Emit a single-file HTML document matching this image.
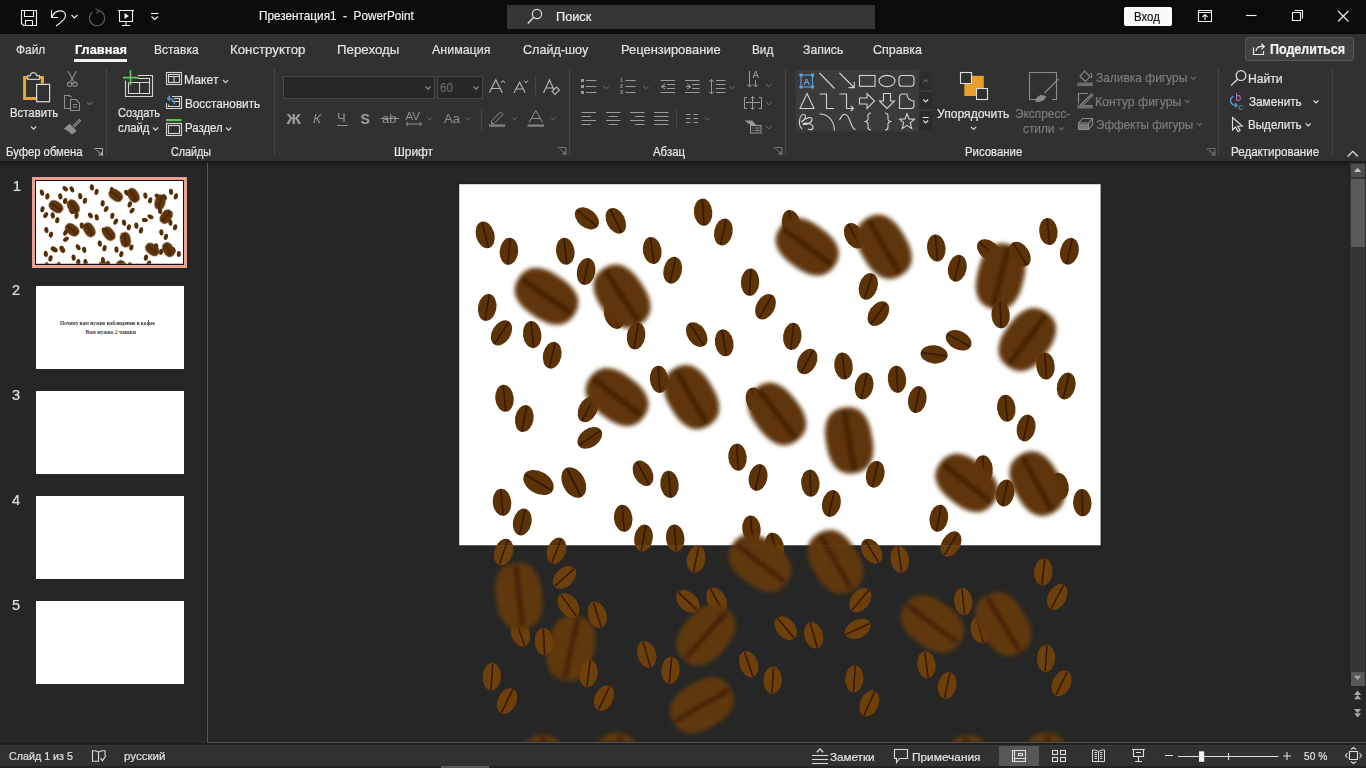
<!DOCTYPE html>
<html><head><meta charset="utf-8">
<style>
*{box-sizing:border-box}
html,body{margin:0;padding:0}
body{width:1366px;height:768px;overflow:hidden;background:#262626;position:relative;font-family:"Liberation Sans",sans-serif;color:#e6e6e6}
.a{position:absolute}
.tx{position:absolute;white-space:nowrap;line-height:1;transform-origin:0 0;-webkit-text-stroke:0.2px currentColor}
#title{left:0;top:0;width:1366px;height:34px;background:#0b0b0b}
#ribbon{left:0;top:34px;width:1366px;height:127px;background:#323131}
#rsep{left:0;top:161px;width:1366px;height:6px;background:linear-gradient(#1b1b1b 0,#1b1b1b 2px,#262626 6px)}
#status{left:0;top:745px;width:1366px;height:21px;background:#323130;border-top:1px solid #3a3a3a}
#sbot{left:0;top:766px;width:1366px;height:2px;background:#222}
.thumb{position:absolute;left:35.5px;width:148px;height:83.5px;background:#fff}
</style></head><body>
<div id="title" class="a"></div>
<div id="ribbon" class="a"></div>
<div id="rsep" class="a"></div>
<div id="status" class="a"></div>
<div id="sbot" class="a"></div>
<div class="a" style="left:507px;top:5px;width:368px;height:24px;background:#363636"></div>
<div class="a" style="left:1124px;top:7px;width:48px;height:19px;background:#fafafa;border-radius:2px"></div>
<div class="a" style="left:74px;top:59px;width:53px;height:3px;background:#f2f2f2"></div>
<div class="a" style="left:1245px;top:37px;width:109px;height:24px;background:#414141;border:1px solid #575757;border-radius:3px"></div>
<!-- slide pane -->
<div class="a" style="left:206px;top:163px;width:3px;height:580px;background:#222"></div><div class="a" style="left:207px;top:163px;width:1px;height:580px;background:#555"></div>
<div class="a" style="left:207px;top:742px;width:1159px;height:1px;background:#555"></div><div class="a" style="left:0;top:743px;width:1366px;height:2px;background:#1e1e1e"></div>
<div class="a" style="left:32px;top:177px;width:155px;height:91px;background:#e9a292"></div>
<div class="a" style="left:35px;top:180px;width:149px;height:85px;background:#1a1212"></div>
<div class="thumb" style="top:285.5px"><div style="position:absolute;left:24px;top:34px;font-family:'Liberation Serif';font-weight:bold;font-size:5.6px;color:#333;white-space:nowrap;transform:scaleX(0.95);transform-origin:0 0">Почему нам нужно наблюдение в кофее</div><div style="position:absolute;left:50px;top:43px;font-family:'Liberation Serif';font-weight:bold;font-size:5.6px;color:#444;white-space:nowrap">Вам нужно 2 чашки</div></div>
<div class="thumb" style="top:390.5px"></div>
<div class="thumb" style="top:495.5px"></div>
<div class="thumb" style="top:600.5px"></div>
<!-- normal view highlighted -->
<div class="a" style="left:999px;top:746px;width:40px;height:20px;background:#575757"></div>
<!-- vertical scrollbar -->
<div class="a" style="left:1348px;top:163px;width:2px;height:523px;background:#222"></div>
<div class="a" style="left:1350px;top:163px;width:15px;height:509px;background:#353535"></div>
<div class="a" style="left:1350.5px;top:164px;width:14px;height:13px;background:#4d4d4d"></div>
<div class="a" style="left:1350.5px;top:179px;width:14px;height:68px;background:#5a5a5a"></div>
<div class="a" style="left:1350.5px;top:672px;width:14px;height:13.5px;background:#575757"></div>
<div class="a" style="left:441px;top:766px;width:48px;height:2px;background:#5a5a5a"></div>
<svg width="1366" height="768" style="position:absolute;left:0;top:0">
<defs>
<path id="Lp" d="M23.2,0.0 L23.0,6.3 L22.6,11.0 L21.7,15.2 L20.6,18.9 L19.2,22.1 L17.5,25.0 L15.5,27.5 L13.2,29.5 L10.6,31.1 L7.7,32.3 L4.4,33.0 L0.0,33.2 L-4.4,33.0 L-7.7,32.3 L-10.6,31.1 L-13.2,29.5 L-15.5,27.5 L-17.5,25.0 L-19.2,22.1 L-20.6,18.9 L-21.7,15.2 L-22.6,11.0 L-23.0,6.3 L-23.2,0.0 L-23.0,-6.3 L-22.6,-11.0 L-21.7,-15.2 L-20.6,-18.9 L-19.2,-22.1 L-17.5,-25.0 L-15.5,-27.5 L-13.2,-29.5 L-10.6,-31.1 L-7.7,-32.3 L-4.4,-33.0 L-0.0,-33.2 L4.4,-33.0 L7.7,-32.3 L10.6,-31.1 L13.2,-29.5 L15.5,-27.5 L17.5,-25.0 L19.2,-22.1 L20.6,-18.9 L21.7,-15.2 L22.6,-11.0 L23.0,-6.3Z"/>
<filter id="blr" x="-30%" y="-30%" width="160%" height="160%"><feGaussianBlur stdDeviation="1.9"/></filter>
<clipPath id="cs"><rect x="459.2" y="184.2" width="641.4" height="361.1"/></clipPath>
<clipPath id="co"><rect x="459.2" y="545.3" width="641.4" height="196.2"/></clipPath>
<g id="insideBeans"><g transform="translate(614.0 316.0) rotate(-25.0) scale(1)"><ellipse rx="9.2" ry="13.6" fill="#5c3207"/><path d="M0.3,-12.9 L-0.2,12.9" stroke="#341704" stroke-width="1.5" fill="none"/></g><g transform="translate(791.1 223.5) rotate(-10.0) scale(1)"><ellipse rx="9.2" ry="13.6" fill="#5c3207"/><path d="M0.3,-12.9 L-0.2,12.9" stroke="#341704" stroke-width="1.5" fill="none"/></g><g transform="translate(854.2 235.7) rotate(-28.0) scale(1)"><ellipse rx="9.2" ry="13.6" fill="#5c3207"/><path d="M0.3,-12.9 L-0.2,12.9" stroke="#341704" stroke-width="1.5" fill="none"/></g><g transform="translate(989.0 250.5) rotate(-50.0) scale(1)"><ellipse rx="9.2" ry="13.6" fill="#5c3207"/><path d="M0.3,-12.9 L-0.2,12.9" stroke="#341704" stroke-width="1.5" fill="none"/></g><g transform="translate(587.9 409.5) rotate(27.0) scale(1)"><ellipse rx="9.2" ry="13.6" fill="#5c3207"/><path d="M0.3,-12.9 L-0.2,12.9" stroke="#341704" stroke-width="1.5" fill="none"/></g><g transform="translate(755.6 400.8) rotate(-20.0) scale(1)"><ellipse rx="9.2" ry="13.6" fill="#5c3207"/><path d="M0.3,-12.9 L-0.2,12.9" stroke="#341704" stroke-width="1.5" fill="none"/></g><g transform="translate(751.5 529.0) rotate(-6.0) scale(1)"><ellipse rx="9.2" ry="13.6" fill="#5c3207"/><path d="M0.3,-12.9 L-0.2,12.9" stroke="#341704" stroke-width="1.5" fill="none"/></g><g transform="translate(774.5 546.0) rotate(-15.0) scale(1)"><ellipse rx="9.2" ry="13.6" fill="#5c3207"/><path d="M0.3,-12.9 L-0.2,12.9" stroke="#341704" stroke-width="1.5" fill="none"/></g><g transform="translate(983.6 468.9) rotate(-5.0) scale(1)"><ellipse rx="9.2" ry="13.6" fill="#5c3207"/><path d="M0.3,-12.9 L-0.2,12.9" stroke="#341704" stroke-width="1.5" fill="none"/></g><g transform="translate(1059.5 486.2) rotate(-10.0) scale(1)"><ellipse rx="9.2" ry="13.6" fill="#5c3207"/><path d="M0.3,-12.9 L-0.2,12.9" stroke="#341704" stroke-width="1.5" fill="none"/></g><g transform="translate(520.4 633.5) rotate(-20.0) scale(1)"><ellipse rx="9.2" ry="13.6" fill="#5c3207"/><path d="M0.3,-12.9 L-0.2,12.9" stroke="#341704" stroke-width="1.5" fill="none"/></g><g transform="translate(687.8 601.4) rotate(-47.0) scale(1)"><ellipse rx="9.2" ry="13.6" fill="#5c3207"/><path d="M0.3,-12.9 L-0.2,12.9" stroke="#341704" stroke-width="1.5" fill="none"/></g><g transform="translate(716.7 600.1) rotate(-30.0) scale(1)"><ellipse rx="9.2" ry="13.6" fill="#5c3207"/><path d="M0.3,-12.9 L-0.2,12.9" stroke="#341704" stroke-width="1.5" fill="none"/></g><g transform="translate(980.0 630.0) rotate(-15.0) scale(1)"><ellipse rx="9.2" ry="13.6" fill="#5c3207"/><path d="M0.3,-12.9 L-0.2,12.9" stroke="#341704" stroke-width="1.5" fill="none"/></g><g transform="translate(546.5 296.3) rotate(-56.0)" filter="url(#blr)"><use href="#Lp" fill="#5f3407"/><path d="M0.6,-31 L-0.3,31" stroke="#341704" stroke-width="3.8" fill="none"/></g><g transform="translate(622.0 296.3) rotate(-34.0)" filter="url(#blr)"><use href="#Lp" fill="#5f3407"/><path d="M0.6,-31 L-0.3,31" stroke="#341704" stroke-width="3.8" fill="none"/></g><g transform="translate(807.2 246.8) rotate(-54.0)" filter="url(#blr)"><use href="#Lp" fill="#5f3407"/><path d="M0.6,-31 L-0.3,31" stroke="#341704" stroke-width="3.8" fill="none"/></g><g transform="translate(883.9 246.8) rotate(-31.0)" filter="url(#blr)"><use href="#Lp" fill="#5f3407"/><path d="M0.6,-31 L-0.3,31" stroke="#341704" stroke-width="3.8" fill="none"/></g><g transform="translate(1000.6 276.5) rotate(14.0)" filter="url(#blr)"><use href="#Lp" fill="#5f3407"/><path d="M0.6,-31 L-0.3,31" stroke="#341704" stroke-width="3.8" fill="none"/></g><g transform="translate(1027.3 339.6) rotate(36.0)" filter="url(#blr)"><use href="#Lp" fill="#5f3407"/><path d="M0.6,-31 L-0.3,31" stroke="#341704" stroke-width="3.8" fill="none"/></g><g transform="translate(617.0 397.1) rotate(-53.0)" filter="url(#blr)"><use href="#Lp" fill="#5f3407"/><path d="M0.6,-31 L-0.3,31" stroke="#341704" stroke-width="3.8" fill="none"/></g><g transform="translate(691.3 397.1) rotate(-31.0)" filter="url(#blr)"><use href="#Lp" fill="#5f3407"/><path d="M0.6,-31 L-0.3,31" stroke="#341704" stroke-width="3.8" fill="none"/></g><g transform="translate(777.0 414.0) rotate(-38.0)" filter="url(#blr)"><use href="#Lp" fill="#5f3407"/><path d="M0.6,-31 L-0.3,31" stroke="#341704" stroke-width="3.8" fill="none"/></g><g transform="translate(849.2 440.4) rotate(-10.0)" filter="url(#blr)"><use href="#Lp" fill="#5f3407"/><path d="M0.6,-31 L-0.3,31" stroke="#341704" stroke-width="3.8" fill="none"/></g><g transform="translate(966.7 483.0) rotate(-52.0)" filter="url(#blr)"><use href="#Lp" fill="#5f3407"/><path d="M0.6,-31 L-0.3,31" stroke="#341704" stroke-width="3.8" fill="none"/></g><g transform="translate(1037.0 483.7) rotate(-29.0)" filter="url(#blr)"><use href="#Lp" fill="#5f3407"/><path d="M0.6,-31 L-0.3,31" stroke="#341704" stroke-width="3.8" fill="none"/></g><g transform="translate(519.0 596.0) rotate(-7.0)" filter="url(#blr)"><use href="#Lp" fill="#5f3407"/><path d="M0.6,-31 L-0.3,31" stroke="#341704" stroke-width="3.8" fill="none"/></g><g transform="translate(571.1 648.1) rotate(12.0)" filter="url(#blr)"><use href="#Lp" fill="#5f3407"/><path d="M0.6,-31 L-0.3,31" stroke="#341704" stroke-width="3.8" fill="none"/></g><g transform="translate(760.0 563.0) rotate(-53.0)" filter="url(#blr)"><use href="#Lp" fill="#5f3407"/><path d="M0.6,-31 L-0.3,31" stroke="#341704" stroke-width="3.8" fill="none"/></g><g transform="translate(706.0 634.8) rotate(41.0)" filter="url(#blr)"><use href="#Lp" fill="#5f3407"/><path d="M0.6,-31 L-0.3,31" stroke="#341704" stroke-width="3.8" fill="none"/></g><g transform="translate(702.0 705.5) rotate(59.0)" filter="url(#blr)"><use href="#Lp" fill="#5f3407"/><path d="M0.6,-31 L-0.3,31" stroke="#341704" stroke-width="3.8" fill="none"/></g><g transform="translate(835.5 562.0) rotate(-31.0)" filter="url(#blr)"><use href="#Lp" fill="#5f3407"/><path d="M0.6,-31 L-0.3,31" stroke="#341704" stroke-width="3.8" fill="none"/></g><g transform="translate(932.5 624.1) rotate(-54.0)" filter="url(#blr)"><use href="#Lp" fill="#5f3407"/><path d="M0.6,-31 L-0.3,31" stroke="#341704" stroke-width="3.8" fill="none"/></g><g transform="translate(1003.3 624.1) rotate(-32.0)" filter="url(#blr)"><use href="#Lp" fill="#5f3407"/><path d="M0.6,-31 L-0.3,31" stroke="#341704" stroke-width="3.8" fill="none"/></g><g transform="translate(543.0 768.0) rotate(0.0)" filter="url(#blr)"><use href="#Lp" fill="#5f3407"/><path d="M0.6,-31 L-0.3,31" stroke="#341704" stroke-width="3.8" fill="none"/></g><g transform="translate(615.0 766.0) rotate(10.0)" filter="url(#blr)"><use href="#Lp" fill="#5f3407"/><path d="M0.6,-31 L-0.3,31" stroke="#341704" stroke-width="3.8" fill="none"/></g><g transform="translate(970.0 768.0) rotate(-10.0)" filter="url(#blr)"><use href="#Lp" fill="#5f3407"/><path d="M0.6,-31 L-0.3,31" stroke="#341704" stroke-width="3.8" fill="none"/></g><g transform="translate(1045.0 766.0) rotate(5.0)" filter="url(#blr)"><use href="#Lp" fill="#5f3407"/><path d="M0.6,-31 L-0.3,31" stroke="#341704" stroke-width="3.8" fill="none"/></g><g transform="translate(485.2 234.9) rotate(-16.0) scale(1)"><ellipse rx="9.2" ry="13.6" fill="#5c3207"/><path d="M0.3,-12.9 L-0.2,12.9" stroke="#341704" stroke-width="1.5" fill="none"/></g><g transform="translate(508.9 251.3) rotate(5.0) scale(1)"><ellipse rx="9.2" ry="13.6" fill="#5c3207"/><path d="M0.3,-12.9 L-0.2,12.9" stroke="#341704" stroke-width="1.5" fill="none"/></g><g transform="translate(586.9 218.3) rotate(-51.0) scale(1)"><ellipse rx="9.2" ry="13.6" fill="#5c3207"/><path d="M0.3,-12.9 L-0.2,12.9" stroke="#341704" stroke-width="1.5" fill="none"/></g><g transform="translate(615.8 220.8) rotate(-27.0) scale(1)"><ellipse rx="9.2" ry="13.6" fill="#5c3207"/><path d="M0.3,-12.9 L-0.2,12.9" stroke="#341704" stroke-width="1.5" fill="none"/></g><g transform="translate(565.3 251.3) rotate(-7.0) scale(1)"><ellipse rx="9.2" ry="13.6" fill="#5c3207"/><path d="M0.3,-12.9 L-0.2,12.9" stroke="#341704" stroke-width="1.5" fill="none"/></g><g transform="translate(586.1 271.5) rotate(11.0) scale(1)"><ellipse rx="9.2" ry="13.6" fill="#5c3207"/><path d="M0.3,-12.9 L-0.2,12.9" stroke="#341704" stroke-width="1.5" fill="none"/></g><g transform="translate(487.2 307.4) rotate(9.0) scale(1)"><ellipse rx="9.2" ry="13.6" fill="#5c3207"/><path d="M0.3,-12.9 L-0.2,12.9" stroke="#341704" stroke-width="1.5" fill="none"/></g><g transform="translate(501.5 332.9) rotate(32.0) scale(1)"><ellipse rx="9.2" ry="13.6" fill="#5c3207"/><path d="M0.3,-12.9 L-0.2,12.9" stroke="#341704" stroke-width="1.5" fill="none"/></g><g transform="translate(532.2 334.6) rotate(-7.0) scale(1)"><ellipse rx="9.2" ry="13.6" fill="#5c3207"/><path d="M0.3,-12.9 L-0.2,12.9" stroke="#341704" stroke-width="1.5" fill="none"/></g><g transform="translate(552.2 355.2) rotate(12.0) scale(1)"><ellipse rx="9.2" ry="13.6" fill="#5c3207"/><path d="M0.3,-12.9 L-0.2,12.9" stroke="#341704" stroke-width="1.5" fill="none"/></g><g transform="translate(636.1 335.9) rotate(9.0) scale(1)"><ellipse rx="9.2" ry="13.6" fill="#5c3207"/><path d="M0.3,-12.9 L-0.2,12.9" stroke="#341704" stroke-width="1.5" fill="none"/></g><g transform="translate(652.2 250.5) rotate(-9.0) scale(1)"><ellipse rx="9.2" ry="13.6" fill="#5c3207"/><path d="M0.3,-12.9 L-0.2,12.9" stroke="#341704" stroke-width="1.5" fill="none"/></g><g transform="translate(672.7 270.3) rotate(12.0) scale(1)"><ellipse rx="9.2" ry="13.6" fill="#5c3207"/><path d="M0.3,-12.9 L-0.2,12.9" stroke="#341704" stroke-width="1.5" fill="none"/></g><g transform="translate(703.1 212.2) rotate(-5.0) scale(1)"><ellipse rx="9.2" ry="13.6" fill="#5c3207"/><path d="M0.3,-12.9 L-0.2,12.9" stroke="#341704" stroke-width="1.5" fill="none"/></g><g transform="translate(723.4 232.0) rotate(11.0) scale(1)"><ellipse rx="9.2" ry="13.6" fill="#5c3207"/><path d="M0.3,-12.9 L-0.2,12.9" stroke="#341704" stroke-width="1.5" fill="none"/></g><g transform="translate(750.1 282.2) rotate(3.0) scale(1)"><ellipse rx="9.2" ry="13.6" fill="#5c3207"/><path d="M0.3,-12.9 L-0.2,12.9" stroke="#341704" stroke-width="1.5" fill="none"/></g><g transform="translate(765.5 306.7) rotate(28.0) scale(1)"><ellipse rx="9.2" ry="13.6" fill="#5c3207"/><path d="M0.3,-12.9 L-0.2,12.9" stroke="#341704" stroke-width="1.5" fill="none"/></g><g transform="translate(696.7 334.6) rotate(-34.0) scale(1)"><ellipse rx="9.2" ry="13.6" fill="#5c3207"/><path d="M0.3,-12.9 L-0.2,12.9" stroke="#341704" stroke-width="1.5" fill="none"/></g><g transform="translate(724.2 342.8) rotate(-10.0) scale(1)"><ellipse rx="9.2" ry="13.6" fill="#5c3207"/><path d="M0.3,-12.9 L-0.2,12.9" stroke="#341704" stroke-width="1.5" fill="none"/></g><g transform="translate(868.3 286.4) rotate(17.0) scale(1)"><ellipse rx="9.2" ry="13.6" fill="#5c3207"/><path d="M0.3,-12.9 L-0.2,12.9" stroke="#341704" stroke-width="1.5" fill="none"/></g><g transform="translate(878.4 313.6) rotate(35.0) scale(1)"><ellipse rx="9.2" ry="13.6" fill="#5c3207"/><path d="M0.3,-12.9 L-0.2,12.9" stroke="#341704" stroke-width="1.5" fill="none"/></g><g transform="translate(936.3 248.0) rotate(-6.0) scale(1)"><ellipse rx="9.2" ry="13.6" fill="#5c3207"/><path d="M0.3,-12.9 L-0.2,12.9" stroke="#341704" stroke-width="1.5" fill="none"/></g><g transform="translate(957.3 268.3) rotate(12.0) scale(1)"><ellipse rx="9.2" ry="13.6" fill="#5c3207"/><path d="M0.3,-12.9 L-0.2,12.9" stroke="#341704" stroke-width="1.5" fill="none"/></g><g transform="translate(1020.0 254.2) rotate(-33.0) scale(1)"><ellipse rx="9.2" ry="13.6" fill="#5c3207"/><path d="M0.3,-12.9 L-0.2,12.9" stroke="#341704" stroke-width="1.5" fill="none"/></g><g transform="translate(1000.6 314.8) rotate(-4.0) scale(1)"><ellipse rx="9.2" ry="13.6" fill="#5c3207"/><path d="M0.3,-12.9 L-0.2,12.9" stroke="#341704" stroke-width="1.5" fill="none"/></g><g transform="translate(1048.4 231.5) rotate(-6.0) scale(1)"><ellipse rx="9.2" ry="13.6" fill="#5c3207"/><path d="M0.3,-12.9 L-0.2,12.9" stroke="#341704" stroke-width="1.5" fill="none"/></g><g transform="translate(1069.4 251.3) rotate(12.0) scale(1)"><ellipse rx="9.2" ry="13.6" fill="#5c3207"/><path d="M0.3,-12.9 L-0.2,12.9" stroke="#341704" stroke-width="1.5" fill="none"/></g><g transform="translate(1045.5 366.0) rotate(-5.0) scale(1)"><ellipse rx="9.2" ry="13.6" fill="#5c3207"/><path d="M0.3,-12.9 L-0.2,12.9" stroke="#341704" stroke-width="1.5" fill="none"/></g><g transform="translate(958.6 340.3) rotate(-63.0) scale(1)"><ellipse rx="9.2" ry="13.6" fill="#5c3207"/><path d="M0.3,-12.9 L-0.2,12.9" stroke="#341704" stroke-width="1.5" fill="none"/></g><g transform="translate(934.1 354.4) rotate(-84.0) scale(1)"><ellipse rx="9.2" ry="13.6" fill="#5c3207"/><path d="M0.3,-12.9 L-0.2,12.9" stroke="#341704" stroke-width="1.5" fill="none"/></g><g transform="translate(792.3 336.4) rotate(6.0) scale(1)"><ellipse rx="9.2" ry="13.6" fill="#5c3207"/><path d="M0.3,-12.9 L-0.2,12.9" stroke="#341704" stroke-width="1.5" fill="none"/></g><g transform="translate(807.2 361.5) rotate(27.0) scale(1)"><ellipse rx="9.2" ry="13.6" fill="#5c3207"/><path d="M0.3,-12.9 L-0.2,12.9" stroke="#341704" stroke-width="1.5" fill="none"/></g><g transform="translate(843.5 366.0) rotate(-8.0) scale(1)"><ellipse rx="9.2" ry="13.6" fill="#5c3207"/><path d="M0.3,-12.9 L-0.2,12.9" stroke="#341704" stroke-width="1.5" fill="none"/></g><g transform="translate(504.5 398.3) rotate(-6.0) scale(1)"><ellipse rx="9.2" ry="13.6" fill="#5c3207"/><path d="M0.3,-12.9 L-0.2,12.9" stroke="#341704" stroke-width="1.5" fill="none"/></g><g transform="translate(524.3 418.6) rotate(10.0) scale(1)"><ellipse rx="9.2" ry="13.6" fill="#5c3207"/><path d="M0.3,-12.9 L-0.2,12.9" stroke="#341704" stroke-width="1.5" fill="none"/></g><g transform="translate(589.8 437.9) rotate(55.0) scale(1)"><ellipse rx="9.2" ry="13.6" fill="#5c3207"/><path d="M0.3,-12.9 L-0.2,12.9" stroke="#341704" stroke-width="1.5" fill="none"/></g><g transform="translate(659.1 379.3) rotate(-5.0) scale(1)"><ellipse rx="9.2" ry="13.6" fill="#5c3207"/><path d="M0.3,-12.9 L-0.2,12.9" stroke="#341704" stroke-width="1.5" fill="none"/></g><g transform="translate(737.5 457.2) rotate(-5.0) scale(1)"><ellipse rx="9.2" ry="13.6" fill="#5c3207"/><path d="M0.3,-12.9 L-0.2,12.9" stroke="#341704" stroke-width="1.5" fill="none"/></g><g transform="translate(758.1 477.5) rotate(12.0) scale(1)"><ellipse rx="9.2" ry="13.6" fill="#5c3207"/><path d="M0.3,-12.9 L-0.2,12.9" stroke="#341704" stroke-width="1.5" fill="none"/></g><g transform="translate(538.5 482.5) rotate(-60.0) scale(1.2)"><ellipse rx="9.2" ry="13.6" fill="#5c3207"/><path d="M0.3,-12.9 L-0.2,12.9" stroke="#341704" stroke-width="1.5" fill="none"/></g><g transform="translate(573.8 482.5) rotate(-28.0) scale(1.2)"><ellipse rx="9.2" ry="13.6" fill="#5c3207"/><path d="M0.3,-12.9 L-0.2,12.9" stroke="#341704" stroke-width="1.5" fill="none"/></g><g transform="translate(643.0 473.3) rotate(-29.0) scale(1)"><ellipse rx="9.2" ry="13.6" fill="#5c3207"/><path d="M0.3,-12.9 L-0.2,12.9" stroke="#341704" stroke-width="1.5" fill="none"/></g><g transform="translate(669.5 484.4) rotate(-6.0) scale(1)"><ellipse rx="9.2" ry="13.6" fill="#5c3207"/><path d="M0.3,-12.9 L-0.2,12.9" stroke="#341704" stroke-width="1.5" fill="none"/></g><g transform="translate(502.0 502.3) rotate(-6.0) scale(1)"><ellipse rx="9.2" ry="13.6" fill="#5c3207"/><path d="M0.3,-12.9 L-0.2,12.9" stroke="#341704" stroke-width="1.5" fill="none"/></g><g transform="translate(522.3 522.0) rotate(12.0) scale(1)"><ellipse rx="9.2" ry="13.6" fill="#5c3207"/><path d="M0.3,-12.9 L-0.2,12.9" stroke="#341704" stroke-width="1.5" fill="none"/></g><g transform="translate(623.2 518.3) rotate(-6.0) scale(1)"><ellipse rx="9.2" ry="13.6" fill="#5c3207"/><path d="M0.3,-12.9 L-0.2,12.9" stroke="#341704" stroke-width="1.5" fill="none"/></g><g transform="translate(643.5 538.1) rotate(9.0) scale(1)"><ellipse rx="9.2" ry="13.6" fill="#5c3207"/><path d="M0.3,-12.9 L-0.2,12.9" stroke="#341704" stroke-width="1.5" fill="none"/></g><g transform="translate(675.2 538.1) rotate(-6.0) scale(1)"><ellipse rx="9.2" ry="13.6" fill="#5c3207"/><path d="M0.3,-12.9 L-0.2,12.9" stroke="#341704" stroke-width="1.5" fill="none"/></g><g transform="translate(864.1 386.0) rotate(12.0) scale(1)"><ellipse rx="9.2" ry="13.6" fill="#5c3207"/><path d="M0.3,-12.9 L-0.2,12.9" stroke="#341704" stroke-width="1.5" fill="none"/></g><g transform="translate(897.0 379.3) rotate(-5.0) scale(1)"><ellipse rx="9.2" ry="13.6" fill="#5c3207"/><path d="M0.3,-12.9 L-0.2,12.9" stroke="#341704" stroke-width="1.5" fill="none"/></g><g transform="translate(917.3 399.6) rotate(11.0) scale(1)"><ellipse rx="9.2" ry="13.6" fill="#5c3207"/><path d="M0.3,-12.9 L-0.2,12.9" stroke="#341704" stroke-width="1.5" fill="none"/></g><g transform="translate(1066.2 386.0) rotate(13.0) scale(1)"><ellipse rx="9.2" ry="13.6" fill="#5c3207"/><path d="M0.3,-12.9 L-0.2,12.9" stroke="#341704" stroke-width="1.5" fill="none"/></g><g transform="translate(1006.3 408.2) rotate(-6.0) scale(1)"><ellipse rx="9.2" ry="13.6" fill="#5c3207"/><path d="M0.3,-12.9 L-0.2,12.9" stroke="#341704" stroke-width="1.5" fill="none"/></g><g transform="translate(1026.1 428.0) rotate(12.0) scale(1)"><ellipse rx="9.2" ry="13.6" fill="#5c3207"/><path d="M0.3,-12.9 L-0.2,12.9" stroke="#341704" stroke-width="1.5" fill="none"/></g><g transform="translate(875.2 474.3) rotate(12.0) scale(1)"><ellipse rx="9.2" ry="13.6" fill="#5c3207"/><path d="M0.3,-12.9 L-0.2,12.9" stroke="#341704" stroke-width="1.5" fill="none"/></g><g transform="translate(810.4 483.2) rotate(-4.0) scale(1)"><ellipse rx="9.2" ry="13.6" fill="#5c3207"/><path d="M0.3,-12.9 L-0.2,12.9" stroke="#341704" stroke-width="1.5" fill="none"/></g><g transform="translate(831.4 503.5) rotate(12.0) scale(1)"><ellipse rx="9.2" ry="13.6" fill="#5c3207"/><path d="M0.3,-12.9 L-0.2,12.9" stroke="#341704" stroke-width="1.5" fill="none"/></g><g transform="translate(1005.1 493.1) rotate(11.0) scale(1)"><ellipse rx="9.2" ry="13.6" fill="#5c3207"/><path d="M0.3,-12.9 L-0.2,12.9" stroke="#341704" stroke-width="1.5" fill="none"/></g><g transform="translate(1082.3 502.7) rotate(-3.0) scale(1)"><ellipse rx="9.2" ry="13.6" fill="#5c3207"/><path d="M0.3,-12.9 L-0.2,12.9" stroke="#341704" stroke-width="1.5" fill="none"/></g><g transform="translate(938.8 518.3) rotate(9.0) scale(1)"><ellipse rx="9.2" ry="13.6" fill="#5c3207"/><path d="M0.3,-12.9 L-0.2,12.9" stroke="#341704" stroke-width="1.5" fill="none"/></g><g transform="translate(951.0 544.0) rotate(30.0) scale(1)"><ellipse rx="9.2" ry="13.6" fill="#5c3207"/><path d="M0.3,-12.9 L-0.2,12.9" stroke="#341704" stroke-width="1.5" fill="none"/></g><g transform="translate(503.6 552.0) rotate(18.0) scale(1)"><ellipse rx="9.2" ry="13.6" fill="#5c3207"/><path d="M0.3,-12.9 L-0.2,12.9" stroke="#341704" stroke-width="1.5" fill="none"/></g><g transform="translate(556.5 550.7) rotate(20.0) scale(1)"><ellipse rx="9.2" ry="13.6" fill="#5c3207"/><path d="M0.3,-12.9 L-0.2,12.9" stroke="#341704" stroke-width="1.5" fill="none"/></g><g transform="translate(564.5 577.4) rotate(47.0) scale(1)"><ellipse rx="9.2" ry="13.6" fill="#5c3207"/><path d="M0.3,-12.9 L-0.2,12.9" stroke="#341704" stroke-width="1.5" fill="none"/></g><g transform="translate(568.5 605.4) rotate(-37.0) scale(1)"><ellipse rx="9.2" ry="13.6" fill="#5c3207"/><path d="M0.3,-12.9 L-0.2,12.9" stroke="#341704" stroke-width="1.5" fill="none"/></g><g transform="translate(597.3 614.8) rotate(-18.0) scale(1)"><ellipse rx="9.2" ry="13.6" fill="#5c3207"/><path d="M0.3,-12.9 L-0.2,12.9" stroke="#341704" stroke-width="1.5" fill="none"/></g><g transform="translate(543.9 641.5) rotate(-4.0) scale(1)"><ellipse rx="9.2" ry="13.6" fill="#5c3207"/><path d="M0.3,-12.9 L-0.2,12.9" stroke="#341704" stroke-width="1.5" fill="none"/></g><g transform="translate(588.5 673.5) rotate(6.0) scale(1)"><ellipse rx="9.2" ry="13.6" fill="#5c3207"/><path d="M0.3,-12.9 L-0.2,12.9" stroke="#341704" stroke-width="1.5" fill="none"/></g><g transform="translate(491.8 676.7) rotate(3.0) scale(1)"><ellipse rx="9.2" ry="13.6" fill="#5c3207"/><path d="M0.3,-12.9 L-0.2,12.9" stroke="#341704" stroke-width="1.5" fill="none"/></g><g transform="translate(507.1 701.0) rotate(25.0) scale(1)"><ellipse rx="9.2" ry="13.6" fill="#5c3207"/><path d="M0.3,-12.9 L-0.2,12.9" stroke="#341704" stroke-width="1.5" fill="none"/></g><g transform="translate(604.0 698.1) rotate(25.0) scale(1)"><ellipse rx="9.2" ry="13.6" fill="#5c3207"/><path d="M0.3,-12.9 L-0.2,12.9" stroke="#341704" stroke-width="1.5" fill="none"/></g><g transform="translate(696.1 559.2) rotate(10.0) scale(1)"><ellipse rx="9.2" ry="13.6" fill="#5c3207"/><path d="M0.3,-12.9 L-0.2,12.9" stroke="#341704" stroke-width="1.5" fill="none"/></g><g transform="translate(646.7 654.3) rotate(-17.0) scale(1)"><ellipse rx="9.2" ry="13.6" fill="#5c3207"/><path d="M0.3,-12.9 L-0.2,12.9" stroke="#341704" stroke-width="1.5" fill="none"/></g><g transform="translate(670.5 670.3) rotate(4.0) scale(1)"><ellipse rx="9.2" ry="13.6" fill="#5c3207"/><path d="M0.3,-12.9 L-0.2,12.9" stroke="#341704" stroke-width="1.5" fill="none"/></g><g transform="translate(748.7 664.2) rotate(-20.0) scale(1)"><ellipse rx="9.2" ry="13.6" fill="#5c3207"/><path d="M0.3,-12.9 L-0.2,12.9" stroke="#341704" stroke-width="1.5" fill="none"/></g><g transform="translate(772.7 680.2) rotate(2.0) scale(1)"><ellipse rx="9.2" ry="13.6" fill="#5c3207"/><path d="M0.3,-12.9 L-0.2,12.9" stroke="#341704" stroke-width="1.5" fill="none"/></g><g transform="translate(871.7 551.2) rotate(-33.0) scale(1)"><ellipse rx="9.2" ry="13.6" fill="#5c3207"/><path d="M0.3,-12.9 L-0.2,12.9" stroke="#341704" stroke-width="1.5" fill="none"/></g><g transform="translate(899.7 559.2) rotate(-9.0) scale(1)"><ellipse rx="9.2" ry="13.6" fill="#5c3207"/><path d="M0.3,-12.9 L-0.2,12.9" stroke="#341704" stroke-width="1.5" fill="none"/></g><g transform="translate(860.4 600.1) rotate(39.0) scale(1)"><ellipse rx="9.2" ry="13.6" fill="#5c3207"/><path d="M0.3,-12.9 L-0.2,12.9" stroke="#341704" stroke-width="1.5" fill="none"/></g><g transform="translate(857.8 628.9) rotate(64.0) scale(1)"><ellipse rx="9.2" ry="13.6" fill="#5c3207"/><path d="M0.3,-12.9 L-0.2,12.9" stroke="#341704" stroke-width="1.5" fill="none"/></g><g transform="translate(785.7 628.1) rotate(-41.0) scale(1)"><ellipse rx="9.2" ry="13.6" fill="#5c3207"/><path d="M0.3,-12.9 L-0.2,12.9" stroke="#341704" stroke-width="1.5" fill="none"/></g><g transform="translate(813.7 635.3) rotate(-17.0) scale(1)"><ellipse rx="9.2" ry="13.6" fill="#5c3207"/><path d="M0.3,-12.9 L-0.2,12.9" stroke="#341704" stroke-width="1.5" fill="none"/></g><g transform="translate(963.2 601.4) rotate(-7.0) scale(1)"><ellipse rx="9.2" ry="13.6" fill="#5c3207"/><path d="M0.3,-12.9 L-0.2,12.9" stroke="#341704" stroke-width="1.5" fill="none"/></g><g transform="translate(1043.3 572.0) rotate(5.0) scale(1)"><ellipse rx="9.2" ry="13.6" fill="#5c3207"/><path d="M0.3,-12.9 L-0.2,12.9" stroke="#341704" stroke-width="1.5" fill="none"/></g><g transform="translate(1057.2 596.9) rotate(27.0) scale(1)"><ellipse rx="9.2" ry="13.6" fill="#5c3207"/><path d="M0.3,-12.9 L-0.2,12.9" stroke="#341704" stroke-width="1.5" fill="none"/></g><g transform="translate(926.4 664.7) rotate(-8.0) scale(1)"><ellipse rx="9.2" ry="13.6" fill="#5c3207"/><path d="M0.3,-12.9 L-0.2,12.9" stroke="#341704" stroke-width="1.5" fill="none"/></g><g transform="translate(947.2 685.5) rotate(11.0) scale(1)"><ellipse rx="9.2" ry="13.6" fill="#5c3207"/><path d="M0.3,-12.9 L-0.2,12.9" stroke="#341704" stroke-width="1.5" fill="none"/></g><g transform="translate(854.3 678.8) rotate(3.0) scale(1)"><ellipse rx="9.2" ry="13.6" fill="#5c3207"/><path d="M0.3,-12.9 L-0.2,12.9" stroke="#341704" stroke-width="1.5" fill="none"/></g><g transform="translate(869.3 703.4) rotate(23.0) scale(1)"><ellipse rx="9.2" ry="13.6" fill="#5c3207"/><path d="M0.3,-12.9 L-0.2,12.9" stroke="#341704" stroke-width="1.5" fill="none"/></g><g transform="translate(1046.0 658.3) rotate(3.0) scale(1)"><ellipse rx="9.2" ry="13.6" fill="#5c3207"/><path d="M0.3,-12.9 L-0.2,12.9" stroke="#341704" stroke-width="1.5" fill="none"/></g><g transform="translate(1061.5 683.4) rotate(25.0) scale(1)"><ellipse rx="9.2" ry="13.6" fill="#5c3207"/><path d="M0.3,-12.9 L-0.2,12.9" stroke="#341704" stroke-width="1.5" fill="none"/></g></g>
</defs>
<rect x="458.2" y="183.2" width="643.4" height="363.1" fill="#1f1f1f"/>
<rect x="459.2" y="184.2" width="641.4" height="361.1" fill="#ffffff"/>
<g clip-path="url(#cs)"><use href="#insideBeans"/></g>
<g clip-path="url(#co)"><g transform="translate(614.0 316.0) rotate(-25.0) scale(1)"><ellipse rx="9.2" ry="13.6" fill="#6c3f0b"/><path d="M0.3,-12.9 L-0.2,12.9" stroke="#381606" stroke-width="1.5" fill="none"/></g><g transform="translate(791.1 223.5) rotate(-10.0) scale(1)"><ellipse rx="9.2" ry="13.6" fill="#6c3f0b"/><path d="M0.3,-12.9 L-0.2,12.9" stroke="#381606" stroke-width="1.5" fill="none"/></g><g transform="translate(854.2 235.7) rotate(-28.0) scale(1)"><ellipse rx="9.2" ry="13.6" fill="#6c3f0b"/><path d="M0.3,-12.9 L-0.2,12.9" stroke="#381606" stroke-width="1.5" fill="none"/></g><g transform="translate(989.0 250.5) rotate(-50.0) scale(1)"><ellipse rx="9.2" ry="13.6" fill="#6c3f0b"/><path d="M0.3,-12.9 L-0.2,12.9" stroke="#381606" stroke-width="1.5" fill="none"/></g><g transform="translate(587.9 409.5) rotate(27.0) scale(1)"><ellipse rx="9.2" ry="13.6" fill="#6c3f0b"/><path d="M0.3,-12.9 L-0.2,12.9" stroke="#381606" stroke-width="1.5" fill="none"/></g><g transform="translate(755.6 400.8) rotate(-20.0) scale(1)"><ellipse rx="9.2" ry="13.6" fill="#6c3f0b"/><path d="M0.3,-12.9 L-0.2,12.9" stroke="#381606" stroke-width="1.5" fill="none"/></g><g transform="translate(751.5 529.0) rotate(-6.0) scale(1)"><ellipse rx="9.2" ry="13.6" fill="#6c3f0b"/><path d="M0.3,-12.9 L-0.2,12.9" stroke="#381606" stroke-width="1.5" fill="none"/></g><g transform="translate(774.5 546.0) rotate(-15.0) scale(1)"><ellipse rx="9.2" ry="13.6" fill="#6c3f0b"/><path d="M0.3,-12.9 L-0.2,12.9" stroke="#381606" stroke-width="1.5" fill="none"/></g><g transform="translate(983.6 468.9) rotate(-5.0) scale(1)"><ellipse rx="9.2" ry="13.6" fill="#6c3f0b"/><path d="M0.3,-12.9 L-0.2,12.9" stroke="#381606" stroke-width="1.5" fill="none"/></g><g transform="translate(1059.5 486.2) rotate(-10.0) scale(1)"><ellipse rx="9.2" ry="13.6" fill="#6c3f0b"/><path d="M0.3,-12.9 L-0.2,12.9" stroke="#381606" stroke-width="1.5" fill="none"/></g><g transform="translate(520.4 633.5) rotate(-20.0) scale(1)"><ellipse rx="9.2" ry="13.6" fill="#6c3f0b"/><path d="M0.3,-12.9 L-0.2,12.9" stroke="#381606" stroke-width="1.5" fill="none"/></g><g transform="translate(687.8 601.4) rotate(-47.0) scale(1)"><ellipse rx="9.2" ry="13.6" fill="#6c3f0b"/><path d="M0.3,-12.9 L-0.2,12.9" stroke="#381606" stroke-width="1.5" fill="none"/></g><g transform="translate(716.7 600.1) rotate(-30.0) scale(1)"><ellipse rx="9.2" ry="13.6" fill="#6c3f0b"/><path d="M0.3,-12.9 L-0.2,12.9" stroke="#381606" stroke-width="1.5" fill="none"/></g><g transform="translate(980.0 630.0) rotate(-15.0) scale(1)"><ellipse rx="9.2" ry="13.6" fill="#6c3f0b"/><path d="M0.3,-12.9 L-0.2,12.9" stroke="#381606" stroke-width="1.5" fill="none"/></g><g transform="translate(546.5 296.3) rotate(-56.0)" filter="url(#blr)"><use href="#Lp" fill="#61390e"/><path d="M0.6,-31 L-0.3,31" stroke="#381606" stroke-width="3.8" fill="none"/></g><g transform="translate(622.0 296.3) rotate(-34.0)" filter="url(#blr)"><use href="#Lp" fill="#61390e"/><path d="M0.6,-31 L-0.3,31" stroke="#381606" stroke-width="3.8" fill="none"/></g><g transform="translate(807.2 246.8) rotate(-54.0)" filter="url(#blr)"><use href="#Lp" fill="#61390e"/><path d="M0.6,-31 L-0.3,31" stroke="#381606" stroke-width="3.8" fill="none"/></g><g transform="translate(883.9 246.8) rotate(-31.0)" filter="url(#blr)"><use href="#Lp" fill="#61390e"/><path d="M0.6,-31 L-0.3,31" stroke="#381606" stroke-width="3.8" fill="none"/></g><g transform="translate(1000.6 276.5) rotate(14.0)" filter="url(#blr)"><use href="#Lp" fill="#61390e"/><path d="M0.6,-31 L-0.3,31" stroke="#381606" stroke-width="3.8" fill="none"/></g><g transform="translate(1027.3 339.6) rotate(36.0)" filter="url(#blr)"><use href="#Lp" fill="#61390e"/><path d="M0.6,-31 L-0.3,31" stroke="#381606" stroke-width="3.8" fill="none"/></g><g transform="translate(617.0 397.1) rotate(-53.0)" filter="url(#blr)"><use href="#Lp" fill="#61390e"/><path d="M0.6,-31 L-0.3,31" stroke="#381606" stroke-width="3.8" fill="none"/></g><g transform="translate(691.3 397.1) rotate(-31.0)" filter="url(#blr)"><use href="#Lp" fill="#61390e"/><path d="M0.6,-31 L-0.3,31" stroke="#381606" stroke-width="3.8" fill="none"/></g><g transform="translate(777.0 414.0) rotate(-38.0)" filter="url(#blr)"><use href="#Lp" fill="#61390e"/><path d="M0.6,-31 L-0.3,31" stroke="#381606" stroke-width="3.8" fill="none"/></g><g transform="translate(849.2 440.4) rotate(-10.0)" filter="url(#blr)"><use href="#Lp" fill="#61390e"/><path d="M0.6,-31 L-0.3,31" stroke="#381606" stroke-width="3.8" fill="none"/></g><g transform="translate(966.7 483.0) rotate(-52.0)" filter="url(#blr)"><use href="#Lp" fill="#61390e"/><path d="M0.6,-31 L-0.3,31" stroke="#381606" stroke-width="3.8" fill="none"/></g><g transform="translate(1037.0 483.7) rotate(-29.0)" filter="url(#blr)"><use href="#Lp" fill="#61390e"/><path d="M0.6,-31 L-0.3,31" stroke="#381606" stroke-width="3.8" fill="none"/></g><g transform="translate(519.0 596.0) rotate(-7.0)" filter="url(#blr)"><use href="#Lp" fill="#61390e"/><path d="M0.6,-31 L-0.3,31" stroke="#381606" stroke-width="3.8" fill="none"/></g><g transform="translate(571.1 648.1) rotate(12.0)" filter="url(#blr)"><use href="#Lp" fill="#61390e"/><path d="M0.6,-31 L-0.3,31" stroke="#381606" stroke-width="3.8" fill="none"/></g><g transform="translate(760.0 563.0) rotate(-53.0)" filter="url(#blr)"><use href="#Lp" fill="#61390e"/><path d="M0.6,-31 L-0.3,31" stroke="#381606" stroke-width="3.8" fill="none"/></g><g transform="translate(706.0 634.8) rotate(41.0)" filter="url(#blr)"><use href="#Lp" fill="#61390e"/><path d="M0.6,-31 L-0.3,31" stroke="#381606" stroke-width="3.8" fill="none"/></g><g transform="translate(702.0 705.5) rotate(59.0)" filter="url(#blr)"><use href="#Lp" fill="#61390e"/><path d="M0.6,-31 L-0.3,31" stroke="#381606" stroke-width="3.8" fill="none"/></g><g transform="translate(835.5 562.0) rotate(-31.0)" filter="url(#blr)"><use href="#Lp" fill="#61390e"/><path d="M0.6,-31 L-0.3,31" stroke="#381606" stroke-width="3.8" fill="none"/></g><g transform="translate(932.5 624.1) rotate(-54.0)" filter="url(#blr)"><use href="#Lp" fill="#61390e"/><path d="M0.6,-31 L-0.3,31" stroke="#381606" stroke-width="3.8" fill="none"/></g><g transform="translate(1003.3 624.1) rotate(-32.0)" filter="url(#blr)"><use href="#Lp" fill="#61390e"/><path d="M0.6,-31 L-0.3,31" stroke="#381606" stroke-width="3.8" fill="none"/></g><g transform="translate(543.0 768.0) rotate(0.0)" filter="url(#blr)"><use href="#Lp" fill="#61390e"/><path d="M0.6,-31 L-0.3,31" stroke="#381606" stroke-width="3.8" fill="none"/></g><g transform="translate(615.0 766.0) rotate(10.0)" filter="url(#blr)"><use href="#Lp" fill="#61390e"/><path d="M0.6,-31 L-0.3,31" stroke="#381606" stroke-width="3.8" fill="none"/></g><g transform="translate(970.0 768.0) rotate(-10.0)" filter="url(#blr)"><use href="#Lp" fill="#61390e"/><path d="M0.6,-31 L-0.3,31" stroke="#381606" stroke-width="3.8" fill="none"/></g><g transform="translate(1045.0 766.0) rotate(5.0)" filter="url(#blr)"><use href="#Lp" fill="#61390e"/><path d="M0.6,-31 L-0.3,31" stroke="#381606" stroke-width="3.8" fill="none"/></g><g transform="translate(485.2 234.9) rotate(-16.0) scale(1)"><ellipse rx="9.2" ry="13.6" fill="#6c3f0b"/><path d="M0.3,-12.9 L-0.2,12.9" stroke="#381606" stroke-width="1.5" fill="none"/></g><g transform="translate(508.9 251.3) rotate(5.0) scale(1)"><ellipse rx="9.2" ry="13.6" fill="#6c3f0b"/><path d="M0.3,-12.9 L-0.2,12.9" stroke="#381606" stroke-width="1.5" fill="none"/></g><g transform="translate(586.9 218.3) rotate(-51.0) scale(1)"><ellipse rx="9.2" ry="13.6" fill="#6c3f0b"/><path d="M0.3,-12.9 L-0.2,12.9" stroke="#381606" stroke-width="1.5" fill="none"/></g><g transform="translate(615.8 220.8) rotate(-27.0) scale(1)"><ellipse rx="9.2" ry="13.6" fill="#6c3f0b"/><path d="M0.3,-12.9 L-0.2,12.9" stroke="#381606" stroke-width="1.5" fill="none"/></g><g transform="translate(565.3 251.3) rotate(-7.0) scale(1)"><ellipse rx="9.2" ry="13.6" fill="#6c3f0b"/><path d="M0.3,-12.9 L-0.2,12.9" stroke="#381606" stroke-width="1.5" fill="none"/></g><g transform="translate(586.1 271.5) rotate(11.0) scale(1)"><ellipse rx="9.2" ry="13.6" fill="#6c3f0b"/><path d="M0.3,-12.9 L-0.2,12.9" stroke="#381606" stroke-width="1.5" fill="none"/></g><g transform="translate(487.2 307.4) rotate(9.0) scale(1)"><ellipse rx="9.2" ry="13.6" fill="#6c3f0b"/><path d="M0.3,-12.9 L-0.2,12.9" stroke="#381606" stroke-width="1.5" fill="none"/></g><g transform="translate(501.5 332.9) rotate(32.0) scale(1)"><ellipse rx="9.2" ry="13.6" fill="#6c3f0b"/><path d="M0.3,-12.9 L-0.2,12.9" stroke="#381606" stroke-width="1.5" fill="none"/></g><g transform="translate(532.2 334.6) rotate(-7.0) scale(1)"><ellipse rx="9.2" ry="13.6" fill="#6c3f0b"/><path d="M0.3,-12.9 L-0.2,12.9" stroke="#381606" stroke-width="1.5" fill="none"/></g><g transform="translate(552.2 355.2) rotate(12.0) scale(1)"><ellipse rx="9.2" ry="13.6" fill="#6c3f0b"/><path d="M0.3,-12.9 L-0.2,12.9" stroke="#381606" stroke-width="1.5" fill="none"/></g><g transform="translate(636.1 335.9) rotate(9.0) scale(1)"><ellipse rx="9.2" ry="13.6" fill="#6c3f0b"/><path d="M0.3,-12.9 L-0.2,12.9" stroke="#381606" stroke-width="1.5" fill="none"/></g><g transform="translate(652.2 250.5) rotate(-9.0) scale(1)"><ellipse rx="9.2" ry="13.6" fill="#6c3f0b"/><path d="M0.3,-12.9 L-0.2,12.9" stroke="#381606" stroke-width="1.5" fill="none"/></g><g transform="translate(672.7 270.3) rotate(12.0) scale(1)"><ellipse rx="9.2" ry="13.6" fill="#6c3f0b"/><path d="M0.3,-12.9 L-0.2,12.9" stroke="#381606" stroke-width="1.5" fill="none"/></g><g transform="translate(703.1 212.2) rotate(-5.0) scale(1)"><ellipse rx="9.2" ry="13.6" fill="#6c3f0b"/><path d="M0.3,-12.9 L-0.2,12.9" stroke="#381606" stroke-width="1.5" fill="none"/></g><g transform="translate(723.4 232.0) rotate(11.0) scale(1)"><ellipse rx="9.2" ry="13.6" fill="#6c3f0b"/><path d="M0.3,-12.9 L-0.2,12.9" stroke="#381606" stroke-width="1.5" fill="none"/></g><g transform="translate(750.1 282.2) rotate(3.0) scale(1)"><ellipse rx="9.2" ry="13.6" fill="#6c3f0b"/><path d="M0.3,-12.9 L-0.2,12.9" stroke="#381606" stroke-width="1.5" fill="none"/></g><g transform="translate(765.5 306.7) rotate(28.0) scale(1)"><ellipse rx="9.2" ry="13.6" fill="#6c3f0b"/><path d="M0.3,-12.9 L-0.2,12.9" stroke="#381606" stroke-width="1.5" fill="none"/></g><g transform="translate(696.7 334.6) rotate(-34.0) scale(1)"><ellipse rx="9.2" ry="13.6" fill="#6c3f0b"/><path d="M0.3,-12.9 L-0.2,12.9" stroke="#381606" stroke-width="1.5" fill="none"/></g><g transform="translate(724.2 342.8) rotate(-10.0) scale(1)"><ellipse rx="9.2" ry="13.6" fill="#6c3f0b"/><path d="M0.3,-12.9 L-0.2,12.9" stroke="#381606" stroke-width="1.5" fill="none"/></g><g transform="translate(868.3 286.4) rotate(17.0) scale(1)"><ellipse rx="9.2" ry="13.6" fill="#6c3f0b"/><path d="M0.3,-12.9 L-0.2,12.9" stroke="#381606" stroke-width="1.5" fill="none"/></g><g transform="translate(878.4 313.6) rotate(35.0) scale(1)"><ellipse rx="9.2" ry="13.6" fill="#6c3f0b"/><path d="M0.3,-12.9 L-0.2,12.9" stroke="#381606" stroke-width="1.5" fill="none"/></g><g transform="translate(936.3 248.0) rotate(-6.0) scale(1)"><ellipse rx="9.2" ry="13.6" fill="#6c3f0b"/><path d="M0.3,-12.9 L-0.2,12.9" stroke="#381606" stroke-width="1.5" fill="none"/></g><g transform="translate(957.3 268.3) rotate(12.0) scale(1)"><ellipse rx="9.2" ry="13.6" fill="#6c3f0b"/><path d="M0.3,-12.9 L-0.2,12.9" stroke="#381606" stroke-width="1.5" fill="none"/></g><g transform="translate(1020.0 254.2) rotate(-33.0) scale(1)"><ellipse rx="9.2" ry="13.6" fill="#6c3f0b"/><path d="M0.3,-12.9 L-0.2,12.9" stroke="#381606" stroke-width="1.5" fill="none"/></g><g transform="translate(1000.6 314.8) rotate(-4.0) scale(1)"><ellipse rx="9.2" ry="13.6" fill="#6c3f0b"/><path d="M0.3,-12.9 L-0.2,12.9" stroke="#381606" stroke-width="1.5" fill="none"/></g><g transform="translate(1048.4 231.5) rotate(-6.0) scale(1)"><ellipse rx="9.2" ry="13.6" fill="#6c3f0b"/><path d="M0.3,-12.9 L-0.2,12.9" stroke="#381606" stroke-width="1.5" fill="none"/></g><g transform="translate(1069.4 251.3) rotate(12.0) scale(1)"><ellipse rx="9.2" ry="13.6" fill="#6c3f0b"/><path d="M0.3,-12.9 L-0.2,12.9" stroke="#381606" stroke-width="1.5" fill="none"/></g><g transform="translate(1045.5 366.0) rotate(-5.0) scale(1)"><ellipse rx="9.2" ry="13.6" fill="#6c3f0b"/><path d="M0.3,-12.9 L-0.2,12.9" stroke="#381606" stroke-width="1.5" fill="none"/></g><g transform="translate(958.6 340.3) rotate(-63.0) scale(1)"><ellipse rx="9.2" ry="13.6" fill="#6c3f0b"/><path d="M0.3,-12.9 L-0.2,12.9" stroke="#381606" stroke-width="1.5" fill="none"/></g><g transform="translate(934.1 354.4) rotate(-84.0) scale(1)"><ellipse rx="9.2" ry="13.6" fill="#6c3f0b"/><path d="M0.3,-12.9 L-0.2,12.9" stroke="#381606" stroke-width="1.5" fill="none"/></g><g transform="translate(792.3 336.4) rotate(6.0) scale(1)"><ellipse rx="9.2" ry="13.6" fill="#6c3f0b"/><path d="M0.3,-12.9 L-0.2,12.9" stroke="#381606" stroke-width="1.5" fill="none"/></g><g transform="translate(807.2 361.5) rotate(27.0) scale(1)"><ellipse rx="9.2" ry="13.6" fill="#6c3f0b"/><path d="M0.3,-12.9 L-0.2,12.9" stroke="#381606" stroke-width="1.5" fill="none"/></g><g transform="translate(843.5 366.0) rotate(-8.0) scale(1)"><ellipse rx="9.2" ry="13.6" fill="#6c3f0b"/><path d="M0.3,-12.9 L-0.2,12.9" stroke="#381606" stroke-width="1.5" fill="none"/></g><g transform="translate(504.5 398.3) rotate(-6.0) scale(1)"><ellipse rx="9.2" ry="13.6" fill="#6c3f0b"/><path d="M0.3,-12.9 L-0.2,12.9" stroke="#381606" stroke-width="1.5" fill="none"/></g><g transform="translate(524.3 418.6) rotate(10.0) scale(1)"><ellipse rx="9.2" ry="13.6" fill="#6c3f0b"/><path d="M0.3,-12.9 L-0.2,12.9" stroke="#381606" stroke-width="1.5" fill="none"/></g><g transform="translate(589.8 437.9) rotate(55.0) scale(1)"><ellipse rx="9.2" ry="13.6" fill="#6c3f0b"/><path d="M0.3,-12.9 L-0.2,12.9" stroke="#381606" stroke-width="1.5" fill="none"/></g><g transform="translate(659.1 379.3) rotate(-5.0) scale(1)"><ellipse rx="9.2" ry="13.6" fill="#6c3f0b"/><path d="M0.3,-12.9 L-0.2,12.9" stroke="#381606" stroke-width="1.5" fill="none"/></g><g transform="translate(737.5 457.2) rotate(-5.0) scale(1)"><ellipse rx="9.2" ry="13.6" fill="#6c3f0b"/><path d="M0.3,-12.9 L-0.2,12.9" stroke="#381606" stroke-width="1.5" fill="none"/></g><g transform="translate(758.1 477.5) rotate(12.0) scale(1)"><ellipse rx="9.2" ry="13.6" fill="#6c3f0b"/><path d="M0.3,-12.9 L-0.2,12.9" stroke="#381606" stroke-width="1.5" fill="none"/></g><g transform="translate(538.5 482.5) rotate(-60.0) scale(1.2)"><ellipse rx="9.2" ry="13.6" fill="#6c3f0b"/><path d="M0.3,-12.9 L-0.2,12.9" stroke="#381606" stroke-width="1.5" fill="none"/></g><g transform="translate(573.8 482.5) rotate(-28.0) scale(1.2)"><ellipse rx="9.2" ry="13.6" fill="#6c3f0b"/><path d="M0.3,-12.9 L-0.2,12.9" stroke="#381606" stroke-width="1.5" fill="none"/></g><g transform="translate(643.0 473.3) rotate(-29.0) scale(1)"><ellipse rx="9.2" ry="13.6" fill="#6c3f0b"/><path d="M0.3,-12.9 L-0.2,12.9" stroke="#381606" stroke-width="1.5" fill="none"/></g><g transform="translate(669.5 484.4) rotate(-6.0) scale(1)"><ellipse rx="9.2" ry="13.6" fill="#6c3f0b"/><path d="M0.3,-12.9 L-0.2,12.9" stroke="#381606" stroke-width="1.5" fill="none"/></g><g transform="translate(502.0 502.3) rotate(-6.0) scale(1)"><ellipse rx="9.2" ry="13.6" fill="#6c3f0b"/><path d="M0.3,-12.9 L-0.2,12.9" stroke="#381606" stroke-width="1.5" fill="none"/></g><g transform="translate(522.3 522.0) rotate(12.0) scale(1)"><ellipse rx="9.2" ry="13.6" fill="#6c3f0b"/><path d="M0.3,-12.9 L-0.2,12.9" stroke="#381606" stroke-width="1.5" fill="none"/></g><g transform="translate(623.2 518.3) rotate(-6.0) scale(1)"><ellipse rx="9.2" ry="13.6" fill="#6c3f0b"/><path d="M0.3,-12.9 L-0.2,12.9" stroke="#381606" stroke-width="1.5" fill="none"/></g><g transform="translate(643.5 538.1) rotate(9.0) scale(1)"><ellipse rx="9.2" ry="13.6" fill="#6c3f0b"/><path d="M0.3,-12.9 L-0.2,12.9" stroke="#381606" stroke-width="1.5" fill="none"/></g><g transform="translate(675.2 538.1) rotate(-6.0) scale(1)"><ellipse rx="9.2" ry="13.6" fill="#6c3f0b"/><path d="M0.3,-12.9 L-0.2,12.9" stroke="#381606" stroke-width="1.5" fill="none"/></g><g transform="translate(864.1 386.0) rotate(12.0) scale(1)"><ellipse rx="9.2" ry="13.6" fill="#6c3f0b"/><path d="M0.3,-12.9 L-0.2,12.9" stroke="#381606" stroke-width="1.5" fill="none"/></g><g transform="translate(897.0 379.3) rotate(-5.0) scale(1)"><ellipse rx="9.2" ry="13.6" fill="#6c3f0b"/><path d="M0.3,-12.9 L-0.2,12.9" stroke="#381606" stroke-width="1.5" fill="none"/></g><g transform="translate(917.3 399.6) rotate(11.0) scale(1)"><ellipse rx="9.2" ry="13.6" fill="#6c3f0b"/><path d="M0.3,-12.9 L-0.2,12.9" stroke="#381606" stroke-width="1.5" fill="none"/></g><g transform="translate(1066.2 386.0) rotate(13.0) scale(1)"><ellipse rx="9.2" ry="13.6" fill="#6c3f0b"/><path d="M0.3,-12.9 L-0.2,12.9" stroke="#381606" stroke-width="1.5" fill="none"/></g><g transform="translate(1006.3 408.2) rotate(-6.0) scale(1)"><ellipse rx="9.2" ry="13.6" fill="#6c3f0b"/><path d="M0.3,-12.9 L-0.2,12.9" stroke="#381606" stroke-width="1.5" fill="none"/></g><g transform="translate(1026.1 428.0) rotate(12.0) scale(1)"><ellipse rx="9.2" ry="13.6" fill="#6c3f0b"/><path d="M0.3,-12.9 L-0.2,12.9" stroke="#381606" stroke-width="1.5" fill="none"/></g><g transform="translate(875.2 474.3) rotate(12.0) scale(1)"><ellipse rx="9.2" ry="13.6" fill="#6c3f0b"/><path d="M0.3,-12.9 L-0.2,12.9" stroke="#381606" stroke-width="1.5" fill="none"/></g><g transform="translate(810.4 483.2) rotate(-4.0) scale(1)"><ellipse rx="9.2" ry="13.6" fill="#6c3f0b"/><path d="M0.3,-12.9 L-0.2,12.9" stroke="#381606" stroke-width="1.5" fill="none"/></g><g transform="translate(831.4 503.5) rotate(12.0) scale(1)"><ellipse rx="9.2" ry="13.6" fill="#6c3f0b"/><path d="M0.3,-12.9 L-0.2,12.9" stroke="#381606" stroke-width="1.5" fill="none"/></g><g transform="translate(1005.1 493.1) rotate(11.0) scale(1)"><ellipse rx="9.2" ry="13.6" fill="#6c3f0b"/><path d="M0.3,-12.9 L-0.2,12.9" stroke="#381606" stroke-width="1.5" fill="none"/></g><g transform="translate(1082.3 502.7) rotate(-3.0) scale(1)"><ellipse rx="9.2" ry="13.6" fill="#6c3f0b"/><path d="M0.3,-12.9 L-0.2,12.9" stroke="#381606" stroke-width="1.5" fill="none"/></g><g transform="translate(938.8 518.3) rotate(9.0) scale(1)"><ellipse rx="9.2" ry="13.6" fill="#6c3f0b"/><path d="M0.3,-12.9 L-0.2,12.9" stroke="#381606" stroke-width="1.5" fill="none"/></g><g transform="translate(951.0 544.0) rotate(30.0) scale(1)"><ellipse rx="9.2" ry="13.6" fill="#6c3f0b"/><path d="M0.3,-12.9 L-0.2,12.9" stroke="#381606" stroke-width="1.5" fill="none"/></g><g transform="translate(503.6 552.0) rotate(18.0) scale(1)"><ellipse rx="9.2" ry="13.6" fill="#6c3f0b"/><path d="M0.3,-12.9 L-0.2,12.9" stroke="#381606" stroke-width="1.5" fill="none"/></g><g transform="translate(556.5 550.7) rotate(20.0) scale(1)"><ellipse rx="9.2" ry="13.6" fill="#6c3f0b"/><path d="M0.3,-12.9 L-0.2,12.9" stroke="#381606" stroke-width="1.5" fill="none"/></g><g transform="translate(564.5 577.4) rotate(47.0) scale(1)"><ellipse rx="9.2" ry="13.6" fill="#6c3f0b"/><path d="M0.3,-12.9 L-0.2,12.9" stroke="#381606" stroke-width="1.5" fill="none"/></g><g transform="translate(568.5 605.4) rotate(-37.0) scale(1)"><ellipse rx="9.2" ry="13.6" fill="#6c3f0b"/><path d="M0.3,-12.9 L-0.2,12.9" stroke="#381606" stroke-width="1.5" fill="none"/></g><g transform="translate(597.3 614.8) rotate(-18.0) scale(1)"><ellipse rx="9.2" ry="13.6" fill="#6c3f0b"/><path d="M0.3,-12.9 L-0.2,12.9" stroke="#381606" stroke-width="1.5" fill="none"/></g><g transform="translate(543.9 641.5) rotate(-4.0) scale(1)"><ellipse rx="9.2" ry="13.6" fill="#6c3f0b"/><path d="M0.3,-12.9 L-0.2,12.9" stroke="#381606" stroke-width="1.5" fill="none"/></g><g transform="translate(588.5 673.5) rotate(6.0) scale(1)"><ellipse rx="9.2" ry="13.6" fill="#6c3f0b"/><path d="M0.3,-12.9 L-0.2,12.9" stroke="#381606" stroke-width="1.5" fill="none"/></g><g transform="translate(491.8 676.7) rotate(3.0) scale(1)"><ellipse rx="9.2" ry="13.6" fill="#6c3f0b"/><path d="M0.3,-12.9 L-0.2,12.9" stroke="#381606" stroke-width="1.5" fill="none"/></g><g transform="translate(507.1 701.0) rotate(25.0) scale(1)"><ellipse rx="9.2" ry="13.6" fill="#6c3f0b"/><path d="M0.3,-12.9 L-0.2,12.9" stroke="#381606" stroke-width="1.5" fill="none"/></g><g transform="translate(604.0 698.1) rotate(25.0) scale(1)"><ellipse rx="9.2" ry="13.6" fill="#6c3f0b"/><path d="M0.3,-12.9 L-0.2,12.9" stroke="#381606" stroke-width="1.5" fill="none"/></g><g transform="translate(696.1 559.2) rotate(10.0) scale(1)"><ellipse rx="9.2" ry="13.6" fill="#6c3f0b"/><path d="M0.3,-12.9 L-0.2,12.9" stroke="#381606" stroke-width="1.5" fill="none"/></g><g transform="translate(646.7 654.3) rotate(-17.0) scale(1)"><ellipse rx="9.2" ry="13.6" fill="#6c3f0b"/><path d="M0.3,-12.9 L-0.2,12.9" stroke="#381606" stroke-width="1.5" fill="none"/></g><g transform="translate(670.5 670.3) rotate(4.0) scale(1)"><ellipse rx="9.2" ry="13.6" fill="#6c3f0b"/><path d="M0.3,-12.9 L-0.2,12.9" stroke="#381606" stroke-width="1.5" fill="none"/></g><g transform="translate(748.7 664.2) rotate(-20.0) scale(1)"><ellipse rx="9.2" ry="13.6" fill="#6c3f0b"/><path d="M0.3,-12.9 L-0.2,12.9" stroke="#381606" stroke-width="1.5" fill="none"/></g><g transform="translate(772.7 680.2) rotate(2.0) scale(1)"><ellipse rx="9.2" ry="13.6" fill="#6c3f0b"/><path d="M0.3,-12.9 L-0.2,12.9" stroke="#381606" stroke-width="1.5" fill="none"/></g><g transform="translate(871.7 551.2) rotate(-33.0) scale(1)"><ellipse rx="9.2" ry="13.6" fill="#6c3f0b"/><path d="M0.3,-12.9 L-0.2,12.9" stroke="#381606" stroke-width="1.5" fill="none"/></g><g transform="translate(899.7 559.2) rotate(-9.0) scale(1)"><ellipse rx="9.2" ry="13.6" fill="#6c3f0b"/><path d="M0.3,-12.9 L-0.2,12.9" stroke="#381606" stroke-width="1.5" fill="none"/></g><g transform="translate(860.4 600.1) rotate(39.0) scale(1)"><ellipse rx="9.2" ry="13.6" fill="#6c3f0b"/><path d="M0.3,-12.9 L-0.2,12.9" stroke="#381606" stroke-width="1.5" fill="none"/></g><g transform="translate(857.8 628.9) rotate(64.0) scale(1)"><ellipse rx="9.2" ry="13.6" fill="#6c3f0b"/><path d="M0.3,-12.9 L-0.2,12.9" stroke="#381606" stroke-width="1.5" fill="none"/></g><g transform="translate(785.7 628.1) rotate(-41.0) scale(1)"><ellipse rx="9.2" ry="13.6" fill="#6c3f0b"/><path d="M0.3,-12.9 L-0.2,12.9" stroke="#381606" stroke-width="1.5" fill="none"/></g><g transform="translate(813.7 635.3) rotate(-17.0) scale(1)"><ellipse rx="9.2" ry="13.6" fill="#6c3f0b"/><path d="M0.3,-12.9 L-0.2,12.9" stroke="#381606" stroke-width="1.5" fill="none"/></g><g transform="translate(963.2 601.4) rotate(-7.0) scale(1)"><ellipse rx="9.2" ry="13.6" fill="#6c3f0b"/><path d="M0.3,-12.9 L-0.2,12.9" stroke="#381606" stroke-width="1.5" fill="none"/></g><g transform="translate(1043.3 572.0) rotate(5.0) scale(1)"><ellipse rx="9.2" ry="13.6" fill="#6c3f0b"/><path d="M0.3,-12.9 L-0.2,12.9" stroke="#381606" stroke-width="1.5" fill="none"/></g><g transform="translate(1057.2 596.9) rotate(27.0) scale(1)"><ellipse rx="9.2" ry="13.6" fill="#6c3f0b"/><path d="M0.3,-12.9 L-0.2,12.9" stroke="#381606" stroke-width="1.5" fill="none"/></g><g transform="translate(926.4 664.7) rotate(-8.0) scale(1)"><ellipse rx="9.2" ry="13.6" fill="#6c3f0b"/><path d="M0.3,-12.9 L-0.2,12.9" stroke="#381606" stroke-width="1.5" fill="none"/></g><g transform="translate(947.2 685.5) rotate(11.0) scale(1)"><ellipse rx="9.2" ry="13.6" fill="#6c3f0b"/><path d="M0.3,-12.9 L-0.2,12.9" stroke="#381606" stroke-width="1.5" fill="none"/></g><g transform="translate(854.3 678.8) rotate(3.0) scale(1)"><ellipse rx="9.2" ry="13.6" fill="#6c3f0b"/><path d="M0.3,-12.9 L-0.2,12.9" stroke="#381606" stroke-width="1.5" fill="none"/></g><g transform="translate(869.3 703.4) rotate(23.0) scale(1)"><ellipse rx="9.2" ry="13.6" fill="#6c3f0b"/><path d="M0.3,-12.9 L-0.2,12.9" stroke="#381606" stroke-width="1.5" fill="none"/></g><g transform="translate(1046.0 658.3) rotate(3.0) scale(1)"><ellipse rx="9.2" ry="13.6" fill="#6c3f0b"/><path d="M0.3,-12.9 L-0.2,12.9" stroke="#381606" stroke-width="1.5" fill="none"/></g><g transform="translate(1061.5 683.4) rotate(25.0) scale(1)"><ellipse rx="9.2" ry="13.6" fill="#6c3f0b"/><path d="M0.3,-12.9 L-0.2,12.9" stroke="#381606" stroke-width="1.5" fill="none"/></g></g>
<g transform="translate(36 181) scale(0.2292) translate(-459.2 -184.2)">
<rect x="459.2" y="184.2" width="641.4" height="361.1" fill="#ffffff"/>
<g clip-path="url(#cs)"><use href="#insideBeans"/></g>
</g>
</svg>
<svg width="1366" height="768" style="position:absolute;left:0;top:0;will-change:transform" fill="none" stroke-linecap="butt" stroke-linejoin="miter">
<!-- title bar icons -->
<g stroke="#f2f2f2" stroke-width="1.1">
<path d="M21.5,10.5 H36.5 V25.5 H23.5 L21.5,23.5 Z"/>
<path d="M24.5,10.5 V16.5 H33.5 V10.5"/>
<path d="M25.5,25.5 V20.5 H32.5 V25.5"/>
<path d="M51.5,10 V17.5 H58"/>
<path d="M52,17 C55,9 65.5,9 65.5,15.5 C65.5,19 62,22 56,26" stroke-width="1.2"/>
<path d="M71.5,15 L74.5,18 L77.5,15"/>
<path d="M118,10.5 H134"/>
<path d="M119.5,10.5 V21.5 H132.5 V10.5"/>
<path d="M126,21.5 V25.5 M122,25.5 H130"/>
<path d="M124.5,13 L129,16 L124.5,19 Z" fill="#f2f2f2" stroke="none"/>
<path d="M151,13.5 H158.5"/>
<path d="M151.5,16.5 L154.75,19.5 L158,16.5"/>
<path d="M1198.5,10.5 H1211.5 V21.5 H1198.5 Z M1198.5,12.5 H1211.5"/>
<path d="M1205,20 V15 M1202.5,17 L1205,14.5 L1207.5,17"/>
<path d="M1246,15.5 H1256.5"/>
<path d="M1292.5,12.5 H1300.5 V20.5 H1292.5 Z M1294.5,10.5 H1302.5 V18.5"/>
<path d="M1338,11 L1348.5,21.5 M1348.5,11 L1338,21.5"/>
</g>
<path d="M92.5,12 A7.6,7.6 0 1 0 98.5,10.6 M95.5,8.8 L98.6,10.6 L96.6,13.4" stroke="#5a5a5a" stroke-width="1.2"/>
<circle cx="537" cy="14" r="4.6" stroke="#e0e0e0" stroke-width="1.2"/>
<path d="M533.5,17.5 L527.8,23.5" stroke="#e0e0e0" stroke-width="1.3"/>
<!-- share icon -->
<g stroke="#ececec" stroke-width="1.2">
<path d="M1253.5,47.5 V54.5 H1263.5 V51"/>
<path d="M1256,51 C1256.5,47.5 1259,46 1263.5,46.5 M1261.3,43.8 L1264.3,46.6 L1261.3,49.4"/>
</g>
<!-- clipboard group -->
<g stroke="#e9a53a" stroke-width="3">
<path d="M28,77.4 H24.6 V98.5 H36.5"/>
<path d="M39.5,77.4 H42.4 V83.5"/>
</g>
<path d="M27.8,79.4 V75.6 H30.5 C30.5,71.6 36.5,71.6 36.5,75.6 H39.4 V79.4 Z" stroke="#c8c8c8" stroke-width="1.2" fill="#323131"/>
<rect x="36.6" y="84.4" width="13" height="17.3" stroke="#dadada" stroke-width="1.2" fill="#323131"/>
<path d="M31,126.5 L33.6,129.1 L36.2,126.5" stroke="#d8d8d8" stroke-width="1.1"/>
<g stroke="#8e8e8e" stroke-width="1.1">
<path d="M68,71 L73.8,81.5 M76.5,71 L70.6,81.5"/>
<circle cx="69.6" cy="84.3" r="2.2"/><circle cx="75" cy="84.3" r="2.2"/>
<path d="M70.5,108.5 H64.5 V95.5 H69.5 L71.5,97.5"/>
<path d="M70.5,99.5 H76 L79.5,103 V110.5 H70.5 Z M73,104.5 H77 M73,107 H77"/>
<path d="M87,102 L89.6,104.6 L92.2,102" stroke="#6a6a6a"/>
<path d="M73,126 L79.3,119.5 L80.5,120.8 L74.2,127.2"/>
<path d="M69.5,124.5 L76,131 L72,133.8 C70,132 67,129.5 64.8,128.5 Z" fill="#8e8e8e"/>
</g>
<!-- new slide -->
<g stroke="#d6d6d6" stroke-width="1.1">
<path d="M125.5,80.5 V96.5 H152.5 V75.5 H138"/>
<path d="M128.5,82.5 V93.5 H149.5 V78.5 H138"/>
<path d="M129,82.5 H149 M139.5,82.5 V93.5"/>
</g>
<path d="M123,77.6 H138.5 M130.5,70 V85.3" stroke="#66c46a" stroke-width="1.6"/>
<path d="M153,127.5 L155.6,130.1 L158.2,127.5" stroke="#d8d8d8" stroke-width="1.1"/>
<g stroke="#d4d4d4" stroke-width="1.1">
<rect x="166.5" y="72.5" width="15" height="12"/>
<rect x="168.5" y="74.5" width="11" height="8"/>
<path d="M168.5,76.5 H179.5 M174,76.5 V82.5"/>
<path d="M223,80 L225.6,82.6 L228.2,80"/>
<path d="M172,96.5 H181.5 V108.5 H166.5 V103"/>
<path d="M174,98.5 H179.5 V106.5 H168.5 V104.5 M172,101.5 H179.5"/>
<rect x="166.5" y="123.5" width="15" height="12"/>
<rect x="168.5" y="125.5" width="11" height="8"/>
<path d="M226,127.5 L228.6,130.1 L231.2,127.5"/>
</g>
<path d="M174.5,104 C174,99.5 171.5,98 168,98.3 M170.2,95.8 L167.6,98.4 L170.2,101" stroke="#4f95d6" stroke-width="1.4"/>
<rect x="166" y="119" width="15.5" height="2.2" fill="#63bf67"/>
<!-- font group -->
<rect x="283.5" y="76.5" width="151" height="22" fill="#272727" stroke="#474747"/>
<rect x="437.5" y="76.5" width="45" height="22" fill="#272727" stroke="#474747"/>
<g stroke="#8a8a8a" stroke-width="1.1">
<path d="M425.5,86.5 L428.2,89.2 L430.9,86.5 M473.5,86.5 L476.2,89.2 L478.9,86.5"/>
</g>
<g stroke="#b4b4b4" stroke-width="1.2">
<path d="M489.3,92.8 L495.8,79.8 L502.3,92.8 M491.6,88.5 H500"/>
<path d="M501,83 L503,80.5 L505,83" stroke-width="1"/>
<path d="M514,92.8 L519.6,82.2 L525.2,92.8 M516,89 H523.2"/>
<path d="M524,80.5 L526,83 L528,80.5" stroke-width="1"/>
<path d="M543.5,93 L549.5,80 L555.5,93 M545.8,88 H553"/>
<path d="M552,91.5 L556.5,87 L559.5,90 L555,94.5 Z" fill="#2e2e2e"/>
</g>
<path d="M535.5,77 V97" stroke="#474747"/>
<g fill="#a0a0a0" font-family="Liberation Sans" stroke="none">
<text x="286.5" y="123.6" font-size="14" font-weight="bold" textLength="14.5" lengthAdjust="spacingAndGlyphs">Ж</text>
<text x="313" y="123.4" font-size="13.5" font-style="italic" fill="#909090">К</text>
<text x="337" y="122" font-size="13" fill="#909090">Ч</text>
<text x="360.5" y="123.6" font-size="14" font-weight="bold">S</text>
<text x="382" y="123.4" font-size="13" fill="#909090">ab</text>
<text x="405.5" y="120" font-size="11.5" fill="#909090">AV</text>
<text x="444" y="123.4" font-size="13" fill="#909090">Aa</text>
</g>
<g stroke="#909090" stroke-width="1">
<path d="M337,125.5 H347.5"/>
<path d="M380.5,118.5 H399"/>
<path d="M406,124 H421.5 M408,122 L406,124 L408,126 M419.5,122 L421.5,124 L419.5,126"/>
<path d="M427.5,117.5 L429.8,119.8 L432.1,117.5 M465.5,117.5 L467.8,119.8 L470.1,117.5 M512,117.5 L514.3,119.8 L516.6,117.5 M551,117.5 L553.3,119.8 L555.6,117.5" stroke="#6e6e6e"/>
<path d="M491.5,121 L500.5,112 L503,114.5 L494,123.5 H491.5 Z"/>
<path d="M529,122.5 L535.8,110.5 L542.6,122.5 M531,118.5 H540.5"/>
<path d="M481.5,109 V130" stroke="#474747"/>
<path d="M558.5,147.5 V148.5 M558.5,147.5 H566 V155 M560,149 L565,154 M562,154 H565 V151" stroke="#7a7a7a"/>
</g>
<rect x="489" y="124.3" width="16" height="2.6" fill="#7c7c7c"/>
<rect x="527.6" y="124.3" width="16.4" height="2.6" fill="#7c7c7c"/>
<!-- paragraph group -->
<g stroke="#9a9a9a" stroke-width="1">
<path d="M586,80.5 H596.5 M586,86.5 H596.5 M586,92.5 H596.5"/>
<path d="M625.5,80.5 H635.5 M625.5,86.5 H635.5 M625.5,92.5 H635.5"/>
<path d="M603.5,86 L606.3,88.8 L609.1,86 M643,86 L645.8,88.8 L648.6,86 M729.6,86 L732.4,88.8 L735.2,86 M704.7,117.5 L707.5,120.3 L710.3,117.5 M766,84 L768.8,86.8 L771.6,84 M766,102 L768.8,104.8 L771.6,102 M766,126 L768.8,128.8 L771.6,126" stroke="#6e6e6e"/>
<path d="M660.5,80.5 H675 M667,84.5 H675 M667,88.5 H675 M660.5,92.5 H675 M665.5,83.8 L661.2,86.5 L665.5,89.2 M661.2,86.5 H666"/>
<path d="M685,80.5 H699.5 M692,84.5 H699.5 M692,88.5 H699.5 M685,92.5 H699.5 M685.5,86.5 H690.5 M687,83.8 L691,86.5 L687,89.2"/>
<path d="M716,80.5 H725.5 M716,84.5 H725.5 M716,88.5 H725.5 M716,92.5 H725.5 M711.5,79.5 V94 M709,82 L711.5,79.5 L714,82 M709,91.5 L711.5,94 L714,91.5"/>
<path d="M581.5,112.5 H596 M581.5,116.5 H591 M581.5,120.5 H596 M581.5,124.5 H591"/>
<path d="M606,112.5 H620.5 M608.5,116.5 H618 M606,120.5 H620.5 M608.5,124.5 H618"/>
<path d="M630,112.5 H644.5 M635,116.5 H644.5 M630,120.5 H644.5 M635,124.5 H644.5"/>
<path d="M654,112.5 H668.5 M654,116.5 H668.5 M654,120.5 H668.5 M654,124.5 H668.5"/>
<path d="M686,114.5 H690.5 M686,118.5 H690.5 M686,122.5 H690.5 M693.5,114.5 H698 M693.5,118.5 H698 M693.5,122.5 H698"/>
<path d="M676.5,109.5 V129.5" stroke="#474747"/>
<path d="M749.5,71 V87 M747,84.5 L749.5,87 L752,84.5 M755.5,80 V87 M753,84.5 L755.5,87 L758,84.5"/>
<path d="M753,78 L755.7,71 L758.4,78 M754,75.6 H757.4"/>
<path d="M747,97.5 H744.5 V108.5 H747 M759,97.5 H761.5 V108.5 H759 M746,102.5 H760 M752.5,96.5 V109.5 M750.5,98.5 L752.5,96.5 L754.5,98.5 M750.5,107.5 L752.5,109.5 L754.5,107.5"/>
<path d="M744.5,120.5 H752 L756,125 H750.5 Z" fill="#9a9a9a" stroke="none"/>
<rect x="750.5" y="125.5" width="10.5" height="7.5"/>
<path d="M752.5,128 H753.5 M755,128 H759.5 M752.5,130.5 H753.5 M755,130.5 H759.5"/>
<path d="M774.5,147.5 H782 V155 M776,149 L781,154 M778,154 H781 V151 M774.5,147.5 V149" stroke="#7a7a7a"/>
</g>
<g fill="#9a9a9a">
<rect x="581" y="79" width="3" height="3"/><rect x="581" y="85" width="3" height="3"/><rect x="581" y="91" width="3" height="3"/>
</g>
<g fill="#9a9a9a" font-family="Liberation Sans" font-size="5.4" font-weight="bold">
<text x="620" y="82.3">1</text><text x="620" y="88.3">2</text><text x="620" y="94.3">3</text>
</g>
<!-- shapes gallery -->
<rect x="795.5" y="70" width="137" height="61.5" fill="#3b3b3b"/>
<rect x="919" y="70.7" width="13.4" height="19.3" fill="#2c2c2c"/>
<rect x="919" y="91.8" width="13.4" height="17.4" fill="#2c2c2c"/>
<rect x="919" y="111" width="13.4" height="20" fill="#2c2c2c"/>
<g stroke-width="1.1" fill="none">
<path d="M923.5,82 L925.7,79.8 L927.9,82" stroke="#666"/>
<path d="M923.3,99.5 L925.7,101.9 L928.1,99.5" stroke="#e0e0e0"/>
<path d="M922.8,117.5 H928.6 M923.3,120.5 L925.7,122.9 L928.1,120.5" stroke="#e0e0e0"/>
</g>
<g stroke="#d2d2d2" stroke-width="1.1" fill="none">
<rect x="801" y="75" width="11.5" height="12" stroke="#56a2e6"/>
<path d="M819.5,73 L834.5,88.5"/>
<path d="M839.5,73 L854,87.5 M848.5,87.6 H854.3 V81.8"/>
<rect x="859.5" y="75.5" width="15.5" height="10.8"/>
<ellipse cx="887" cy="81" rx="8" ry="5.6"/>
<rect x="899" y="75.5" width="15" height="10.8" rx="3"/>
<path d="M800,108.5 L807,93.5 L814,108.5 Z"/>
<path d="M819.5,94 H826.5 V108.5 H834"/>
<path d="M839.5,94 H846.5 V108.5 H853.5 M850.8,105.8 L853.5,108.5 L850.8,111.2"/>
<path d="M859.5,98 H867 V93.5 L874.5,101 L867,108.5 V104 H859.5 Z"/>
<path d="M883.5,93.5 H890.5 V101 H894.5 L887,108.5 L879.5,101 H883.5 Z"/>
<path d="M899.5,97 C899.5,95 900.5,94 902.5,94 H907 C907,98 910,101 914,101 V105.5 C914,107.5 913,108.5 911,108.5 H899.5 Z"/>
<path d="M802,129 C797,124 800,114 804,114.5 C807,115 805,121 801,122 M801,122 C806,117 813,116 812,120 C811,124 804,125 803,124 C806,122 814,124 813,128 C812.5,130 810,130 808,129"/>
<path d="M819.5,114 C828,114 834,120 834.5,130.5"/>
<path d="M839.5,120 C842,114 845.5,112.5 848,116.5 C851,122 852,129.5 855.5,129.5"/>
<path d="M871,113 C868.5,113 868,114 868,116 V119.5 C868,120.5 867,121 865.5,121.5 C867,122 868,122.5 868,123.5 V127 C868,129 868.5,130 871,130"/>
<path d="M885,113 C887.5,113 888,114 888,116 V119.5 C888,120.5 889,121 890.5,121.5 C889,122 888,122.5 888,123.5 V127 C888,129 887.5,130 885,130"/>
<path d="M907,113.8 L909,118.9 L914.4,119.2 L910.3,122.7 L911.7,128.6 L907,125.4 L902.3,128.6 L903.7,122.7 L899.6,119.2 L905,118.9 Z"/>
</g>
<g fill="#56a2e6"><rect x="799.5" y="73.5" width="3" height="3"/><rect x="811" y="73.5" width="3" height="3"/><rect x="799.5" y="85.5" width="3" height="3"/><rect x="811" y="85.5" width="3" height="3"/></g>
<text x="803.2" y="85" font-family="Liberation Sans" font-weight="bold" font-size="9.5" fill="#56a2e6">A</text>
<!-- arrange -->
<rect x="964.3" y="75.8" width="19.5" height="20.2" fill="#e99e2c"/>
<rect x="960.5" y="72.5" width="11" height="11" fill="#2e2e2e" stroke="#dedede" stroke-width="1.1"/>
<rect x="976.5" y="88.5" width="11" height="11" fill="#2e2e2e" stroke="#dedede" stroke-width="1.1"/>
<path d="M971,126.8 L973.6,129.4 L976.2,126.8" stroke="#d8d8d8" stroke-width="1.1"/>
<!-- quick styles + fill/outline/effects -->
<g stroke="#8c8c8c" stroke-width="1.1">
<path d="M1040,99.5 H1029.5 V72.5 H1056.5 V99.5 H1052"/>
<path d="M1044.5,93 L1058.5,79"/>
<path d="M1041.5,95.5 C1038,96 1036.5,98.5 1036,101.5 C1040,101.5 1044.5,100 1045.5,96.5 Z" fill="#8c8c8c"/>
<path d="M1059,127.5 L1061.3,129.8 L1063.6,127.5" stroke="#6a6a6a"/>
<path d="M1080,76.5 L1084.5,71 L1090,76.5 L1085.5,81.5 Z M1090.5,73 C1092,74.5 1092,77 1091,78.5"/>
<path d="M1078.5,103.5 V93.5 H1088 M1080.5,105 L1091.5,94 L1092.8,95.3 L1081.8,106.3 Z"/>
<path d="M1078.5,123 L1082.5,118.5 H1092.5 V125 L1088.5,129.5 H1078.5 Z M1078.5,123 H1088.5 V129.5 M1088.5,123 L1092.5,118.5" fill="none"/>
<path d="M1191,77 L1193.4,79.4 L1195.8,77 M1185,100 L1187.4,102.4 L1189.8,100 M1197,123 L1199.4,125.4 L1201.8,123" stroke="#6a6a6a"/>
<path d="M1207.5,148.5 V149.5 M1207.5,148.5 H1215 V156 M1209,150 L1214,155 M1211,155 H1214 V152 M1207.5,148.5 V150" stroke="#6a6a6a"/>
</g>
<rect x="1077.4" y="82.5" width="15.5" height="3.5" fill="#6e6e6e"/>
<rect x="1077.4" y="105" width="15.5" height="3.5" fill="#6e6e6e"/>
<path d="M1079,124 H1088 V129 H1079 Z" fill="#777"/>
<!-- editing -->
<g stroke="#e2e2e2" stroke-width="1.2">
<circle cx="1241" cy="75.6" r="4.9"/>
<path d="M1237.5,79.2 L1231,85.6"/>
<path d="M1232.5,117.5 V130 L1235.6,127 L1238,131.5 L1240,130.5 L1237.8,126.2 L1242.3,126 Z" stroke-width="1.1"/>
<path d="M1313.6,100.5 L1316,102.9 L1318.4,100.5 M1305.8,123.5 L1308.2,125.9 L1310.6,123.5" stroke-width="1.1"/>
<path d="M1347.6,156.5 L1352.8,151.3 L1358,156.5" stroke-width="1.2"/>
</g>
<text x="1235.4" y="100.8" font-family="Liberation Sans" font-size="10" fill="#c57bd8">b</text>
<text x="1238.3" y="109.6" font-family="Liberation Sans" font-size="9.5" fill="#4e9ed8">c</text>
<path d="M1233.5,96 C1229.5,98 1229.5,103.5 1234,105.2 L1237,105.2 M1235,103.2 L1237,105.2 L1235,107.2" stroke="#4e9ed8" stroke-width="1.3"/>
<!-- group separators -->
<g stroke="#454545" stroke-width="1">
<path d="M106.5,68 V155 M274.5,68 V155 M569.5,68 V155 M785.5,68 V155 M1218.5,68 V155 M1332.5,68 V155"/>
<path d="M94.8,148.5 V149.5 M94.8,148.5 H102.5 V156 M96.5,150 L101.5,155 M98.5,155 H101.5 V152" stroke="#a8a8a8"/>
</g>
<!-- status bar icons -->
<g stroke="#dcdcdc" stroke-width="1.1">
<path d="M98.5,752 C96.5,750.8 94.5,750.5 92.5,750.8 V761.2 H98.5 Z M98.5,752 C100.5,750.8 102.5,750.5 105,750.8 V755.5 M98.5,761.2 V756.5"/><path d="M100.5,758 L102.3,760.8 L106,755.5" stroke-width="1.2"/>
<path d="M812,755.5 H828 M812,759.5 H828 M812,763.5 H828" stroke-width="1"/><path d="M816.8,752.2 L820,749 L823.2,752.2" stroke-width="1.3"/>
<path d="M894.5,749.5 H907.5 V758.5 H899.5 L896.5,762.5 V758.5 H894.5 Z"/>
<rect x="1012.5" y="750.5" width="13" height="11"/>
<path d="M1014.5,750.5 V761.5 M1014.5,758.5 H1025.5"/><rect x="1018.5" y="753.5" width="4" height="2"/>
<rect x="1052.5" y="750.5" width="5" height="4"/><rect x="1060.5" y="750.5" width="5" height="4"/>
<rect x="1052.5" y="757.5" width="5" height="4"/><rect x="1060.5" y="757.5" width="5" height="4"/>
<path d="M1098.5,751.5 C1096.5,750 1094,749.8 1092.5,750 V761.5 H1104.5 V750 C1103,749.8 1100.5,750 1098.5,751.5 V761.5 M1094.5,752.5 H1097 M1094.5,754.5 H1097 M1094.5,756.5 H1097 M1094.5,758.5 H1097 M1100,752.5 H1102.5 M1100,754.5 H1102.5 M1100,756.5 H1102.5 M1100,758.5 H1102.5" stroke-width="1"/>
<path d="M1132,749.5 H1145 M1133.5,749.5 V756.5 H1143.5 V749.5 M1138.5,756.5 V761 M1135,761.5 H1142 M1136,752.5 H1141"/>
<path d="M1165,755.5 H1173 M1283,756 H1291 M1287,752 V760"/>
<path d="M1178,756.5 H1278.5"/>
<path d="M1228.5,753 V760"/>
<path d="M1349.5,751.5 H1357.5 V759.5 H1349.5 Z M1351,749.5 L1353.5,747.5 L1356,749.5 M1351,761.5 L1353.5,763.5 L1356,761.5 M1347.5,753 L1345.5,755.5 L1347.5,758 M1359.5,753 L1361.5,755.5 L1359.5,758"/>
</g>
<rect x="1199" y="751.3" width="5.2" height="10.5" fill="#f2f2f2"/>
<!-- scrollbar arrows -->
<g fill="#a6a6a6">
<path d="M1354,172 L1357.6,167.8 L1361.2,172 Z" fill="#c4c4c4"/>
<path d="M1354,675.8 L1357.6,680 L1361.2,675.8 Z"/>
<path d="M1354,695 L1357.6,690.6 L1361.2,695 Z M1354,699.3 L1357.6,695 L1361.2,699.3 Z"/>
<path d="M1354,709 L1357.6,713.3 L1361.2,709 Z M1354,713.2 L1357.6,717.5 L1361.2,713.2 Z"/>
</g>
</svg>

<div class="tx" style="left:259.09px;top:10.00px;font-size:12.94px;color:#f0f0f0;font-weight:normal;transform:scaleX(0.909)">Презентация1&nbsp; -&nbsp; PowerPoint</div>
<div class="tx" style="left:556.41px;top:11.23px;font-size:12.79px;color:#ececec;font-weight:normal;transform:scaleX(0.994)">Поиск</div>
<div class="tx" style="left:1134.43px;top:10.38px;font-size:13.08px;color:#141414;font-weight:normal;transform:scaleX(0.874)">Вход</div>
<div class="tx" style="left:15.70px;top:42.73px;font-size:13.37px;color:#e2e2e2;font-weight:normal;transform:scaleX(0.892)">Файл</div>
<div class="tx" style="left:74.60px;top:42.73px;font-size:13.37px;color:#ffffff;font-weight:bold;transform:scaleX(0.956)">Главная</div>
<div class="tx" style="left:154.10px;top:42.73px;font-size:13.37px;color:#e2e2e2;font-weight:normal;transform:scaleX(0.898)">Вставка</div>
<div class="tx" style="left:230.21px;top:42.73px;font-size:13.37px;color:#e2e2e2;font-weight:normal;transform:scaleX(0.991)">Конструктор</div>
<div class="tx" style="left:337.31px;top:42.73px;font-size:13.37px;color:#e2e2e2;font-weight:normal;transform:scaleX(0.994)">Переходы</div>
<div class="tx" style="left:432.10px;top:42.73px;font-size:13.37px;color:#e2e2e2;font-weight:normal;transform:scaleX(0.932)">Анимация</div>
<div class="tx" style="left:523.40px;top:42.73px;font-size:13.37px;color:#e2e2e2;font-weight:normal;transform:scaleX(0.941)">Слайд-шоу</div>
<div class="tx" style="left:620.63px;top:42.73px;font-size:13.37px;color:#e2e2e2;font-weight:normal;transform:scaleX(0.966)">Рецензирование</div>
<div class="tx" style="left:751.62px;top:42.73px;font-size:13.37px;color:#e2e2e2;font-weight:normal;transform:scaleX(0.881)">Вид</div>
<div class="tx" style="left:803.30px;top:42.73px;font-size:13.37px;color:#e2e2e2;font-weight:normal;transform:scaleX(0.919)">Запись</div>
<div class="tx" style="left:873.30px;top:42.73px;font-size:13.37px;color:#e2e2e2;font-weight:normal;transform:scaleX(0.936)">Справка</div>
<div class="tx" style="left:1270.00px;top:41.65px;font-size:14.53px;color:#f4f4f4;font-weight:bold;transform:scaleX(0.860)">Поделиться</div>
<div class="tx" style="left:9.54px;top:106.16px;font-size:13.23px;color:#e6e6e6;font-weight:normal;transform:scaleX(0.861)">Вставить</div>
<div class="tx" style="left:117.50px;top:106.16px;font-size:13.23px;color:#e6e6e6;font-weight:normal;transform:scaleX(0.838)">Создать</div>
<div class="tx" style="left:117.50px;top:120.76px;font-size:13.23px;color:#e6e6e6;font-weight:normal;transform:scaleX(0.853)">слайд</div>
<div class="tx" style="left:184.48px;top:73.16px;font-size:13.23px;color:#e6e6e6;font-weight:normal;transform:scaleX(0.924)">Макет</div>
<div class="tx" style="left:184.51px;top:96.76px;font-size:13.23px;color:#e6e6e6;font-weight:normal;transform:scaleX(0.888)">Восстановить</div>
<div class="tx" style="left:184.54px;top:120.66px;font-size:13.23px;color:#e6e6e6;font-weight:normal;transform:scaleX(0.862)">Раздел</div>
<div class="tx" style="left:5.58px;top:145.92px;font-size:12.21px;color:#e6e6e6;font-weight:normal;transform:scaleX(0.924)">Буфер обмена</div>
<div class="tx" style="left:170.50px;top:145.92px;font-size:12.21px;color:#e6e6e6;font-weight:normal;transform:scaleX(0.881)">Слайды</div>
<div class="tx" style="left:393.73px;top:145.92px;font-size:12.21px;color:#e6e6e6;font-weight:normal;transform:scaleX(0.969)">Шрифт</div>
<div class="tx" style="left:653.00px;top:145.92px;font-size:12.21px;color:#e6e6e6;font-weight:normal;transform:scaleX(0.935)">Абзац</div>
<div class="tx" style="left:964.57px;top:145.92px;font-size:12.21px;color:#e6e6e6;font-weight:normal;transform:scaleX(0.932)">Рисование</div>
<div class="tx" style="left:1230.65px;top:145.92px;font-size:12.21px;color:#e6e6e6;font-weight:normal;transform:scaleX(0.948)">Редактирование</div>
<div class="tx" style="left:937.40px;top:106.66px;font-size:13.23px;color:#e6e6e6;font-weight:normal;transform:scaleX(0.919)">Упорядочить</div>
<div class="tx" style="left:1015.00px;top:107.46px;font-size:13.23px;color:#7c7c7c;font-weight:normal;transform:scaleX(0.897)">Экспресс-</div>
<div class="tx" style="left:1022.70px;top:121.76px;font-size:13.23px;color:#7c7c7c;font-weight:normal;transform:scaleX(0.895)">стили</div>
<div class="tx" style="left:1096.00px;top:71.26px;font-size:13.23px;color:#7c7c7c;font-weight:normal;transform:scaleX(0.904)">Заливка фигуры</div>
<div class="tx" style="left:1095.07px;top:94.76px;font-size:13.23px;color:#7c7c7c;font-weight:normal;transform:scaleX(0.935)">Контур фигуры</div>
<div class="tx" style="left:1096.00px;top:117.56px;font-size:13.23px;color:#7c7c7c;font-weight:normal;transform:scaleX(0.882)">Эффекты фигуры</div>
<div class="tx" style="left:1248.09px;top:71.96px;font-size:13.23px;color:#e6e6e6;font-weight:normal;transform:scaleX(0.914)">Найти</div>
<div class="tx" style="left:1249.00px;top:94.76px;font-size:13.23px;color:#e6e6e6;font-weight:normal;transform:scaleX(0.887)">Заменить</div>
<div class="tx" style="left:1248.12px;top:118.26px;font-size:13.23px;color:#e6e6e6;font-weight:normal;transform:scaleX(0.879)">Выделить</div>
<div class="tx" style="left:8.50px;top:750.49px;font-size:11.77px;color:#e0e0e0;font-weight:normal;transform:scaleX(0.910)">Слайд 1 из 5</div>
<div class="tx" style="left:123.70px;top:750.49px;font-size:11.77px;color:#e0e0e0;font-weight:normal;transform:scaleX(0.984)">русский</div>
<div class="tx" style="left:829.60px;top:750.99px;font-size:11.77px;color:#e0e0e0;font-weight:normal;transform:scaleX(0.990)">Заметки</div>
<div class="tx" style="left:911.60px;top:750.99px;font-size:11.77px;color:#e0e0e0;font-weight:normal;transform:scaleX(1.008)">Примечания</div>
<div class="tx" style="left:1304.00px;top:750.39px;font-size:11.77px;color:#e0e0e0;font-weight:normal;transform:scaleX(0.870)">50 %</div>
<div class="tx" style="left:12.80px;top:179.27px;font-size:14.97px;color:#e0e0e0;font-weight:normal;transform:scaleX(1.000)">1</div>
<div class="tx" style="left:12.00px;top:283.45px;font-size:14.53px;color:#e0e0e0;font-weight:normal;transform:scaleX(1.000)">2</div>
<div class="tx" style="left:12.00px;top:388.25px;font-size:14.53px;color:#e0e0e0;font-weight:normal;transform:scaleX(1.000)">3</div>
<div class="tx" style="left:12.00px;top:492.95px;font-size:14.53px;color:#e0e0e0;font-weight:normal;transform:scaleX(1.000)">4</div>
<div class="tx" style="left:12.00px;top:597.65px;font-size:14.53px;color:#e0e0e0;font-weight:normal;transform:scaleX(1.000)">5</div>
<div class="tx" style="left:440.00px;top:81.26px;font-size:13.23px;color:#6c6c6c;font-weight:normal;transform:scaleX(0.871)">60</div>
</body></html>
